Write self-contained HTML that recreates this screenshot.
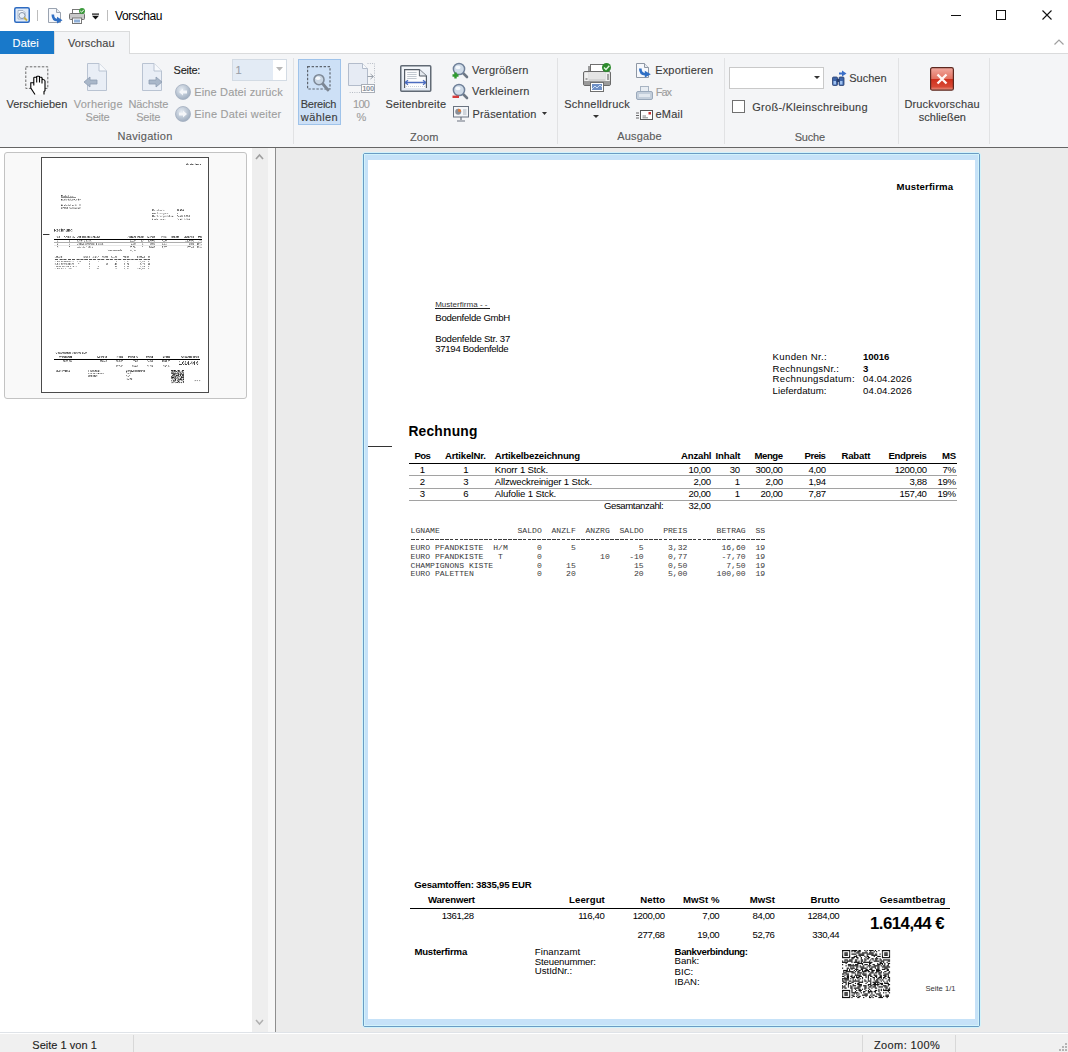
<!DOCTYPE html><html><head><meta charset="utf-8"><style>
html,body{margin:0;padding:0;width:1068px;height:1052px;overflow:hidden;background:#fff}
.r,.t{position:absolute}
.t{white-space:nowrap}
.thumb .t{color:#444 !important}
svg.r{overflow:visible}
</style></head><body>
<div class="r" style="left:0px;top:0px;width:1068px;height:31px;background:#fff"></div>
<div class="t" style="left:115.00px;top:10.00px;font-size:12px;line-height:12px;font-family:'Liberation Sans', sans-serif;font-weight:normal;color:#000;letter-spacing:-0.363px;">Vorschau</div>
<div class="r" style="left:37px;top:10px;width:1px;height:11px;background:#bdbdbd"></div>
<div class="r" style="left:107px;top:10px;width:1px;height:11px;background:#bdbdbd"></div>
<div class="r" style="left:951px;top:15px;width:10px;height:1px;background:#111"></div>
<div class="r" style="left:996px;top:10px;width:10px;height:10px;border:1px solid #111;box-sizing:border-box"></div>
<svg class="r" style="left:1042px;top:10px;" width="10" height="10" viewBox="0 0 10 10"><path d="M0.5 0.5L9.5 9.5M9.5 0.5L0.5 9.5" stroke="#111" stroke-width="1.1"/></svg>
<div class="r" style="left:0px;top:31px;width:1068px;height:23px;background:#fff"></div>
<div class="r" style="left:0px;top:53px;width:1068px;height:1px;background:#dadbdc"></div>
<div class="r" style="left:0px;top:31px;width:54px;height:23px;background:#1979ca"></div>
<div class="t" style="left:12.60px;top:38.00px;font-size:11px;line-height:11px;font-family:'Liberation Sans', sans-serif;font-weight:normal;color:#fff;letter-spacing:0.129px;-webkit-text-stroke:0.12px currentColor;">Datei</div>
<div class="r" style="left:54px;top:31px;width:76px;height:24px;background:#f4f5f7;border:1px solid #dadbdc;border-bottom:none;box-sizing:border-box"></div>
<div class="t" style="left:68.00px;top:38.00px;font-size:11px;line-height:11px;font-family:'Liberation Sans', sans-serif;font-weight:normal;color:#444;letter-spacing:0.119px;-webkit-text-stroke:0.12px currentColor;">Vorschau</div>
<svg class="r" style="left:1054px;top:39px;" width="10" height="6" viewBox="0 0 10 6"><path d="M0.5 5.5L5 1L9.5 5.5" stroke="#a0a0a0" stroke-width="1.2" fill="none"/></svg>
<div class="r" style="left:0px;top:54px;width:1068px;height:93px;background:#f4f5f7"></div>
<div class="r" style="left:0px;top:147px;width:1068px;height:1px;background:#656565"></div>
<div class="r" style="left:293px;top:58px;width:1px;height:86px;background:#e1e2e4"></div>
<div class="r" style="left:557px;top:58px;width:1px;height:86px;background:#e1e2e4"></div>
<div class="r" style="left:724px;top:58px;width:1px;height:86px;background:#e1e2e4"></div>
<div class="r" style="left:898px;top:58px;width:1px;height:86px;background:#e1e2e4"></div>
<div class="r" style="left:989px;top:58px;width:1px;height:86px;background:#e1e2e4"></div>
<div class="t" style="left:117.50px;top:131.00px;font-size:11px;line-height:11px;font-family:'Liberation Sans', sans-serif;font-weight:normal;color:#5a5a5a;letter-spacing:0.314px;-webkit-text-stroke:0.12px currentColor;">Navigation</div>
<div class="t" style="left:409.90px;top:132.00px;font-size:11px;line-height:11px;font-family:'Liberation Sans', sans-serif;font-weight:normal;color:#5a5a5a;letter-spacing:0.098px;-webkit-text-stroke:0.12px currentColor;">Zoom</div>
<div class="t" style="left:617.20px;top:131.00px;font-size:11px;line-height:11px;font-family:'Liberation Sans', sans-serif;font-weight:normal;color:#5a5a5a;letter-spacing:0.175px;-webkit-text-stroke:0.12px currentColor;">Ausgabe</div>
<div class="t" style="left:794.70px;top:132.00px;font-size:11px;line-height:11px;font-family:'Liberation Sans', sans-serif;font-weight:normal;color:#5a5a5a;letter-spacing:-0.221px;-webkit-text-stroke:0.12px currentColor;">Suche</div>
<div class="t" style="left:6.40px;top:99.00px;font-size:11px;line-height:11px;font-family:'Liberation Sans', sans-serif;font-weight:normal;color:#3c3c3c;letter-spacing:0.045px;-webkit-text-stroke:0.12px currentColor;">Verschieben</div>
<div class="t" style="left:73.80px;top:99.00px;font-size:11px;line-height:11px;font-family:'Liberation Sans', sans-serif;font-weight:normal;color:#9e9e9e;letter-spacing:0.203px;-webkit-text-stroke:0.12px currentColor;">Vorherige</div>
<div class="t" style="left:85.60px;top:112.00px;font-size:11px;line-height:11px;font-family:'Liberation Sans', sans-serif;font-weight:normal;color:#9e9e9e;letter-spacing:-0.270px;-webkit-text-stroke:0.12px currentColor;">Seite</div>
<div class="t" style="left:128.40px;top:99.00px;font-size:11px;line-height:11px;font-family:'Liberation Sans', sans-serif;font-weight:normal;color:#9e9e9e;letter-spacing:-0.045px;-webkit-text-stroke:0.12px currentColor;">Nächste</div>
<div class="t" style="left:136.30px;top:112.00px;font-size:11px;line-height:11px;font-family:'Liberation Sans', sans-serif;font-weight:normal;color:#9e9e9e;letter-spacing:-0.270px;-webkit-text-stroke:0.12px currentColor;">Seite</div>
<div class="t" style="left:173.60px;top:65.00px;font-size:11px;line-height:11px;font-family:'Liberation Sans', sans-serif;font-weight:normal;color:#1e1e1e;letter-spacing:-0.261px;-webkit-text-stroke:0.12px currentColor;">Seite:</div>
<div class="r" style="left:232px;top:59px;width:55px;height:22px;background:#fff;border:1px solid #d3dbe4;box-sizing:border-box"></div>
<div class="r" style="left:233px;top:60px;width:40px;height:20px;background:#e3ebf5"></div>
<div class="t" style="left:235.50px;top:65.00px;font-size:11px;line-height:11px;font-family:'Liberation Sans', sans-serif;font-weight:normal;color:#9aa0a8;letter-spacing:0.000px;-webkit-text-stroke:0.12px currentColor;">1</div>
<svg class="r" style="left:276px;top:67px;" width="7" height="4" viewBox="0 0 7 4"><path d="M0 0H7L3.5 4Z" fill="#b8b8b8"/></svg>
<div class="t" style="left:194.30px;top:87.00px;font-size:11px;line-height:11px;font-family:'Liberation Sans', sans-serif;font-weight:normal;color:#9e9e9e;letter-spacing:0.141px;-webkit-text-stroke:0.12px currentColor;">Eine Datei zurück</div>
<div class="t" style="left:194.30px;top:109.00px;font-size:11px;line-height:11px;font-family:'Liberation Sans', sans-serif;font-weight:normal;color:#9e9e9e;letter-spacing:0.240px;-webkit-text-stroke:0.12px currentColor;">Eine Datei weiter</div>
<div class="r" style="left:298px;top:59px;width:43px;height:66px;background:#cde0f6;border:1px solid #9fc3ea;box-sizing:border-box"></div>
<div class="t" style="left:300.80px;top:99.00px;font-size:11px;line-height:11px;font-family:'Liberation Sans', sans-serif;font-weight:normal;color:#3c3c3c;letter-spacing:-0.282px;-webkit-text-stroke:0.12px currentColor;">Bereich</div>
<div class="t" style="left:300.86px;top:112.00px;font-size:11px;line-height:11px;font-family:'Liberation Sans', sans-serif;font-weight:normal;color:#3c3c3c;letter-spacing:0.375px;-webkit-text-stroke:0.12px currentColor;">wählen</div>
<div class="t" style="left:353.00px;top:99.00px;font-size:11px;line-height:11px;font-family:'Liberation Sans', sans-serif;font-weight:normal;color:#9e9e9e;letter-spacing:-0.685px;-webkit-text-stroke:0.12px currentColor;">100</div>
<div class="t" style="left:356.61px;top:112.00px;font-size:11px;line-height:11px;font-family:'Liberation Sans', sans-serif;font-weight:normal;color:#9e9e9e;letter-spacing:0.000px;-webkit-text-stroke:0.12px currentColor;">%</div>
<div class="t" style="left:385.60px;top:99.00px;font-size:11px;line-height:11px;font-family:'Liberation Sans', sans-serif;font-weight:normal;color:#3c3c3c;letter-spacing:0.156px;-webkit-text-stroke:0.12px currentColor;">Seitenbreite</div>
<div class="t" style="left:471.90px;top:65.00px;font-size:11px;line-height:11px;font-family:'Liberation Sans', sans-serif;font-weight:normal;color:#3c3c3c;letter-spacing:0.161px;-webkit-text-stroke:0.12px currentColor;">Vergrößern</div>
<div class="t" style="left:471.90px;top:86.00px;font-size:11px;line-height:11px;font-family:'Liberation Sans', sans-serif;font-weight:normal;color:#3c3c3c;letter-spacing:0.255px;-webkit-text-stroke:0.12px currentColor;">Verkleinern</div>
<div class="t" style="left:472.40px;top:109.00px;font-size:11px;line-height:11px;font-family:'Liberation Sans', sans-serif;font-weight:normal;color:#3c3c3c;letter-spacing:0.212px;-webkit-text-stroke:0.12px currentColor;">Präsentation</div>
<svg class="r" style="left:542px;top:112px;" width="5" height="3" viewBox="0 0 5 3"><path d="M0 0H5L2.5 3Z" fill="#333"/></svg>
<div class="t" style="left:564.30px;top:99.00px;font-size:11px;line-height:11px;font-family:'Liberation Sans', sans-serif;font-weight:normal;color:#3c3c3c;letter-spacing:0.234px;-webkit-text-stroke:0.12px currentColor;">Schnelldruck</div>
<svg class="r" style="left:593px;top:115px;" width="6" height="3" viewBox="0 0 6 3"><path d="M0 0H6L3 3Z" fill="#333"/></svg>
<div class="t" style="left:655.20px;top:65.00px;font-size:11px;line-height:11px;font-family:'Liberation Sans', sans-serif;font-weight:normal;color:#3c3c3c;letter-spacing:0.173px;-webkit-text-stroke:0.12px currentColor;">Exportieren</div>
<div class="t" style="left:655.70px;top:87.00px;font-size:11px;line-height:11px;font-family:'Liberation Sans', sans-serif;font-weight:normal;color:#9e9e9e;letter-spacing:-1.008px;-webkit-text-stroke:0.12px currentColor;">Fax</div>
<div class="t" style="left:655.50px;top:109.00px;font-size:11px;line-height:11px;font-family:'Liberation Sans', sans-serif;font-weight:normal;color:#3c3c3c;letter-spacing:0.228px;-webkit-text-stroke:0.12px currentColor;">eMail</div>
<div class="r" style="left:729px;top:67px;width:95px;height:22px;background:#fff;border:1px solid #c9c9c9;box-sizing:border-box"></div>
<svg class="r" style="left:814px;top:76px;" width="6" height="3" viewBox="0 0 6 3"><path d="M0 0H6L3 3Z" fill="#333"/></svg>
<div class="t" style="left:849.30px;top:73.00px;font-size:11px;line-height:11px;font-family:'Liberation Sans', sans-serif;font-weight:normal;color:#3c3c3c;letter-spacing:-0.018px;-webkit-text-stroke:0.12px currentColor;">Suchen</div>
<div class="r" style="left:732px;top:100px;width:13px;height:13px;background:#fff;border:1px solid #707070;box-sizing:border-box"></div>
<div class="t" style="left:752.30px;top:102.00px;font-size:11px;line-height:11px;font-family:'Liberation Sans', sans-serif;font-weight:normal;color:#3c3c3c;letter-spacing:0.262px;-webkit-text-stroke:0.12px currentColor;">Groß-/Kleinschreibung</div>
<div class="t" style="left:904.40px;top:99.00px;font-size:11px;line-height:11px;font-family:'Liberation Sans', sans-serif;font-weight:normal;color:#3c3c3c;letter-spacing:0.152px;-webkit-text-stroke:0.12px currentColor;">Druckvorschau</div>
<div class="t" style="left:918.70px;top:112.00px;font-size:11px;line-height:11px;font-family:'Liberation Sans', sans-serif;font-weight:normal;color:#3c3c3c;letter-spacing:0.027px;-webkit-text-stroke:0.12px currentColor;">schließen</div>
<div class="r" style="left:0px;top:148px;width:275px;height:884px;background:#fff"></div>
<div class="r" style="left:4px;top:152px;width:243px;height:247px;background:#f9f9f9;border:1px solid #c3c3c3;border-radius:3px;box-sizing:border-box"></div>
<div class="r" style="left:41px;top:157px;width:168px;height:236px;background:#fff;border:1px solid #4a4a4a;box-sizing:border-box"></div>
<div class="r" style="left:252px;top:148px;width:16px;height:884px;background:#eeeeee"></div>
<div class="r" style="left:268px;top:148px;width:7px;height:884px;background:#f7f7f7"></div>
<div class="r" style="left:275px;top:148px;width:1px;height:884px;background:#8e8e8e"></div>
<svg class="r" style="left:255px;top:153px;" width="9" height="7" viewBox="0 0 9 7"><path d="M1 6L4.5 2L8 6" stroke="#a0a0a0" stroke-width="1.7" fill="none"/></svg>
<svg class="r" style="left:255px;top:1019px;" width="9" height="7" viewBox="0 0 9 7"><path d="M1 1L4.5 5L8 1" stroke="#b0b0b0" stroke-width="1.5" fill="none"/></svg>
<div class="r" style="left:276px;top:148px;width:792px;height:884px;background:#ebebeb"></div>
<div class="r" style="left:362px;top:152px;width:619px;height:876px;border:1px solid #d2f3fb;border-radius:3px;box-sizing:border-box"></div>
<div class="r" style="left:363px;top:153px;width:617px;height:874px;border:1px solid #6a9cc4;border-radius:2px;box-sizing:border-box;background:#c6e2f8"></div>
<div class="r" style="left:364px;top:154px;width:615px;height:872px;border:1px solid #d2f3fb;box-sizing:border-box"></div>
<div class="r" style="left:368px;top:160px;width:607px;height:859px;background:#fff"></div>
<svg class="r" style="left:14px;top:7px;" width="16" height="16" viewBox="0 0 16 16"><rect x="0.75" y="0.75" width="14.5" height="14.5" rx="1.5" fill="#dfeaf8" stroke="#2e6bc1" stroke-width="1.5"/><path d="M4 3.5H9L11 5.5V12H4Z" fill="#f4f7fb" stroke="#9aa8ba" stroke-width="0.8"/><circle cx="8" cy="8.5" r="3" fill="#e8f0fa" stroke="#8796aa" stroke-width="1"/><path d="M10.2 10.7L13 13.5" stroke="#c8b040" stroke-width="1.8"/></svg>
<svg class="r" style="left:48px;top:8px;" width="15" height="15" viewBox="0 0 15 15"><path d="M0.5 0.5H8.5L12.5 4.5V14.5H0.5Z" fill="#f6f8fc" stroke="#9aa3b0" stroke-width="1"/><path d="M8.5 0.5V4.5H12.5" fill="#e6eaf0" stroke="#9aa3b0" stroke-width="1"/><path d="M4.8 6.5Q4.8 12 9.5 12.2" stroke="#2f6fc4" stroke-width="2.6" fill="none"/><path d="M9 8.8L14.5 12.2L9 15.6Z" fill="#2f6fc4"/></svg>
<svg class="r" style="left:69px;top:8px;" width="16" height="16" viewBox="0 0 16 16"><rect x="3.5" y="1.5" width="8" height="4" fill="#fff" stroke="#777" stroke-width="1"/><rect x="0.5" y="5.5" width="15" height="6" rx="1" fill="#c9c9c9" stroke="#6e6e6e" stroke-width="1"/><rect x="3.5" y="10" width="9" height="5.5" fill="#fff" stroke="#777" stroke-width="1"/><rect x="5" y="11.5" width="6" height="3" fill="#8fb0d8"/><circle cx="13" cy="3" r="3" fill="#3a9a3a"/><path d="M11.3 3L12.6 4.2L14.8 1.8" stroke="#fff" stroke-width="1" fill="none"/></svg>
<svg class="r" style="left:92px;top:13px;" width="8" height="7" viewBox="0 0 8 7"><rect x="0" y="0.5" width="7" height="1.2" fill="#111"/><path d="M0 2.8H7L3.5 6.5Z" fill="#111"/></svg>
<svg class="r" style="left:25px;top:66px;" width="24" height="29" viewBox="0 0 24 29"><rect x="0.8" y="0.8" width="22" height="21.6" fill="none" stroke="#6a6a6a" stroke-width="1" stroke-dasharray="2.5 1.5"/><path d="M6 22V17H9V12L12 10.5H14.5L17 11.5L20 14V25L19 28.5H10Z" fill="#fff"/><path d="M10 28.5L5.8 22V16.8H8.8V19.5M8.8 16.8V12Q8.8 11.3 9.5 11.3H11Q11.7 11.3 11.7 12V16.5M11.7 12V10.8Q11.7 10.3 12.3 10.3H13.8Q14.5 10.3 14.5 11V16.5M14.5 11.5Q14.5 11.2 15 11.2H16.2Q17 11.2 17 12V17.5M17 12.8L18 13.5Q20 13.8 20 15V24.8L19 25.5V28.5" fill="none" stroke="#000" stroke-width="1.1"/></svg>
<svg class="r" style="left:83px;top:63px;" width="26" height="29" viewBox="0 0 26 29"><path d="M4.5 0.5H16L23.5 8V27.5H4.5Z" fill="#e9eef6" stroke="#b9c3d2" stroke-width="1"/><path d="M16 0.5V8H23.5" fill="#f7f9fc" stroke="#b9c3d2" stroke-width="1"/><path d="M1 19L7 14V17H14V21H7V24Z" fill="#a9b7c9" stroke="#8e9db2" stroke-width="0.8"/></svg>
<svg class="r" style="left:138px;top:63px;" width="26" height="29" viewBox="0 0 26 29"><path d="M4.5 0.5H16L23.5 8V27.5H4.5Z" fill="#e9eef6" stroke="#b9c3d2" stroke-width="1"/><path d="M16 0.5V8H23.5" fill="#f7f9fc" stroke="#b9c3d2" stroke-width="1"/><path d="M24 19L18 14V17H11V21H18V24Z" fill="#a9b7c9" stroke="#8e9db2" stroke-width="0.8"/></svg>
<svg class="r" style="left:175px;top:84px;" width="16" height="16" viewBox="0 0 16 16"><defs><radialGradient id="cg84" cx="0.4" cy="0.35" r="0.7"><stop offset="0" stop-color="#e6ecf3"/><stop offset="1" stop-color="#9aa9bc"/></radialGradient></defs><circle cx="8" cy="8" r="7.5" fill="url(#cg84)" stroke="#a3afbf" stroke-width="0.8"/><path d="M4 8L8 4.5V6.5H12V9.5H8V11.5Z" fill="#f4f6f9"/></svg>
<svg class="r" style="left:175px;top:106px;" width="16" height="16" viewBox="0 0 16 16"><defs><radialGradient id="cg106" cx="0.4" cy="0.35" r="0.7"><stop offset="0" stop-color="#e6ecf3"/><stop offset="1" stop-color="#9aa9bc"/></radialGradient></defs><circle cx="8" cy="8" r="7.5" fill="url(#cg106)" stroke="#a3afbf" stroke-width="0.8"/><path d="M12 8L8 4.5V6.5H4V9.5H8V11.5Z" fill="#f4f6f9"/></svg>
<svg class="r" style="left:307px;top:66px;" width="25" height="27" viewBox="0 0 25 27"><rect x="0.6" y="0.6" width="22.4" height="22.4" fill="none" stroke="#5f6670" stroke-width="1.2" stroke-dasharray="2.4 1.6"/><path d="M15.5 17.5L21 24" stroke="#7d8794" stroke-width="2.8" stroke-linecap="round"/><circle cx="12" cy="13.7" r="5" fill="#c9d6e4" stroke="#7f8a98" stroke-width="1.6"/><ellipse cx="11" cy="12.3" rx="2.4" ry="1.7" fill="#f6f9fc"/></svg>
<svg class="r" style="left:348px;top:63px;" width="28" height="30" viewBox="0 0 28 30"><path d="M19.5 0.5H26.5V29.5H0.5" fill="none" stroke="#b5bbc4" stroke-width="1" stroke-dasharray="1 1.3"/><path d="M0.5 0.5H14.5L19.5 5.5V22.5H0.5Z" fill="#e6ebf4" stroke="#b3bccb" stroke-width="1"/><path d="M14.5 0.5V5.5H19.5" fill="#f7f9fc" stroke="#b3bccb" stroke-width="1"/><path d="M19.5 13.5H25M22.5 11L25.5 13.5L22.5 16" stroke="#9aa1ab" stroke-width="1" fill="none"/><rect x="13.5" y="21.5" width="13" height="8" fill="#fff" stroke="#a8aeb7" stroke-width="1"/><text x="20" y="28.2" font-size="7.5" font-family="Liberation Sans" text-anchor="middle" fill="#8e959f" font-weight="bold" letter-spacing="-0.3">100</text></svg>
<svg class="r" style="left:400px;top:65px;" width="32" height="28" viewBox="0 0 32 28"><defs><linearGradient id="sbg" x1="0" y1="0" x2="0" y2="1"><stop offset="0" stop-color="#f4f7fb"/><stop offset="1" stop-color="#dfe6f0"/></linearGradient></defs><rect x="0.75" y="0.75" width="30" height="25.5" rx="1" fill="url(#sbg)" stroke="#616a75" stroke-width="1.5"/><path d="M4.6 23V4.6H19.4L26.4 11V23" fill="#fcfdfe" stroke="#545c66" stroke-width="1.2"/><path d="M19.4 4.6V11H26.4" fill="#e3e8ee" stroke="#545c66" stroke-width="1"/><path d="M7.2 7.5H16.6M7.2 9.5H16.6M7.2 11.5H16.6M7.2 13.5H16.6" stroke="#a9b1bb" stroke-width="0.7"/><path d="M5 17.5H26M5 17.5L8 15.3M5 17.5L8 19.7M26 17.5L23 15.3M26 17.5L23 19.7" stroke="#4b6cc0" stroke-width="1.3" fill="none"/><path d="M6 21.5H25" stroke="#b9c2d0" stroke-width="0.8" stroke-dasharray="1 1"/></svg>
<svg class="r" style="left:452px;top:62px;" width="17" height="17" viewBox="0 0 17 17"><path d="M10 10L15 15" stroke="#6e7884" stroke-width="2.6" stroke-linecap="round"/><circle cx="7" cy="7" r="5.6" fill="#cfdbe8" stroke="#6f8099" stroke-width="1.5"/><ellipse cx="6" cy="5.5" rx="2.6" ry="1.8" fill="#f4f8fc"/><path d="M0.5 13.5H6.5M3.5 10.5V16.5" stroke="#2f9a2f" stroke-width="2.4"/></svg>
<svg class="r" style="left:452px;top:83px;" width="17" height="17" viewBox="0 0 17 17"><path d="M10 10L15 15" stroke="#6e7884" stroke-width="2.6" stroke-linecap="round"/><circle cx="7" cy="7" r="5.6" fill="#cfdbe8" stroke="#6f8099" stroke-width="1.5"/><ellipse cx="6" cy="5.5" rx="2.6" ry="1.8" fill="#f4f8fc"/><path d="M0.5 13.8H7" stroke="#d53b3b" stroke-width="2.4"/></svg>
<svg class="r" style="left:453px;top:106px;" width="16" height="16" viewBox="0 0 16 16"><rect x="0.5" y="0.5" width="15" height="10.5" fill="#f4f6f9" stroke="#6a7380" stroke-width="1"/><circle cx="5.2" cy="5.8" r="3" fill="#8a8f98"/><path d="M5.2 5.8V2.8A3 3 0 0 1 8.2 5.8Z" fill="#e07b3a"/><path d="M10 4H13.5M10 6H13.5M10 8H13.5" stroke="#9aa3ae" stroke-width="0.8"/><path d="M8 11V14M4 15H12" stroke="#6a7380" stroke-width="1.2"/></svg>
<svg class="r" style="left:583px;top:62px;" width="29" height="30" viewBox="0 0 29 30"><rect x="7.5" y="2.5" width="13" height="8" fill="#fff" stroke="#6f6f6f" stroke-width="1"/><path d="M6 10V4" stroke="#444" stroke-width="1"/><rect x="0.5" y="9.5" width="27" height="14" rx="1.5" fill="#d2d2d2" stroke="#6a6a6a" stroke-width="1"/><rect x="6" y="10" width="16" height="7" fill="#e4e4e4"/><rect x="1.5" y="10.5" width="4" height="12" fill="#f0f0f0"/><rect x="22.5" y="10.5" width="4" height="12" fill="#f0f0f0"/><path d="M24 13H26M24 15H26M24 17H26M2.5 17H4.5" stroke="#555" stroke-width="1"/><rect x="1" y="19" width="26" height="4" fill="#9a9a9a"/><rect x="7.5" y="20.5" width="13" height="9" fill="#fff" stroke="#6f6f6f" stroke-width="1"/><rect x="9" y="22" width="10" height="6" fill="#6e8fc5"/><path d="M9 27L12 24L14 26L17 23L19 25" stroke="#c8dcf4" stroke-width="1" fill="none"/><circle cx="23.5" cy="5.5" r="4.5" fill="#2c8a2c"/><path d="M21 5.5L23 7.5L26.3 3.8" stroke="#dff5df" stroke-width="1.4" fill="none"/></svg>
<svg class="r" style="left:636px;top:63px;" width="16" height="15" viewBox="0 0 16 15"><path d="M0.5 0.5H8.5L12.5 4.5V14.5H0.5Z" fill="#f6f8fc" stroke="#8e97a4" stroke-width="1"/><path d="M8.5 0.5V4.5H12.5" fill="#e6eaf0" stroke="#8e97a4" stroke-width="1"/><path d="M4.3 5.5Q4.3 11 9 11.2" stroke="#2f6fc4" stroke-width="2.6" fill="none"/><path d="M8.8 7.8L14.8 11.2L8.8 14.6Z" fill="#2f6fc4"/></svg>
<svg class="r" style="left:636px;top:86px;" width="17" height="14" viewBox="0 0 17 14"><rect x="4.5" y="0.5" width="8" height="5" fill="#e8edf3" stroke="#a7b3c2" stroke-width="1"/><rect x="0.5" y="5.5" width="16" height="8" rx="1.5" fill="#c3cedb" stroke="#9aa9bb" stroke-width="1"/><rect x="3" y="8" width="11" height="3" fill="#e2e8ef"/></svg>
<svg class="r" style="left:636px;top:110px;" width="17" height="10" viewBox="0 0 17 10"><path d="M0 3H3M0 5.5H3M0 8H3" stroke="#555" stroke-width="0.9"/><rect x="4.5" y="0.5" width="12" height="9" fill="#fff" stroke="#555" stroke-width="1"/><path d="M6.5 6H10M6.5 7.8H12" stroke="#666" stroke-width="0.8"/><rect x="12.5" y="2" width="2.5" height="2.5" fill="#c33"/></svg>
<svg class="r" style="left:832px;top:70px;" width="15" height="16" viewBox="0 0 15 16"><path d="M10 0.5L14.5 3.5L10 6.5V4.5H7V2.5H10Z" fill="#3a6fc8"/><rect x="0.5" y="7" width="5" height="8.5" rx="1" fill="#3d64a8" stroke="#283f6e" stroke-width="0.8"/><rect x="7" y="7" width="5" height="8.5" rx="1" fill="#3d64a8" stroke="#283f6e" stroke-width="0.8"/><rect x="4.5" y="9" width="3" height="3" fill="#283f6e"/><rect x="1.5" y="11" width="2.5" height="3.5" fill="#9ec0ee"/><rect x="8" y="11" width="2.5" height="3.5" fill="#9ec0ee"/></svg>
<svg class="r" style="left:930px;top:67px;" width="24" height="24" viewBox="0 0 24 24"><defs><linearGradient id="rg" x1="0" y1="0" x2="0" y2="1"><stop offset="0" stop-color="#f2aaa0"/><stop offset="0.5" stop-color="#e2705f"/><stop offset="0.52" stop-color="#cf2f1c"/><stop offset="0.85" stop-color="#d84a36"/><stop offset="1" stop-color="#eea090"/></linearGradient></defs><rect x="0.6" y="0.6" width="22.8" height="22.6" rx="1.8" fill="url(#rg)" stroke="#5c2820" stroke-width="1.2"/><path d="M7.5 7.5L16.5 16.5M16.5 7.5L7.5 16.5" stroke="#fff6f4" stroke-width="2.4"/></svg>
<div class="r" style="left:0px;top:1032px;width:1068px;height:1px;background:#dfe3e8"></div>
<div class="r" style="left:0px;top:1033px;width:1068px;height:1px;background:#ffffff"></div>
<div class="r" style="left:0px;top:1034px;width:1068px;height:18px;background:#f0f0f0"></div>
<div class="r" style="left:133px;top:1035px;width:1px;height:17px;background:#d8d8d8"></div>
<div class="r" style="left:862px;top:1035px;width:1px;height:17px;background:#d8d8d8"></div>
<div class="r" style="left:955px;top:1035px;width:1px;height:17px;background:#d8d8d8"></div>
<svg class="r" style="left:1056px;top:1040px;" width="12" height="12" viewBox="0 0 12 12"><rect x="9" y="3" width="2" height="2" fill="#b4b4b4"/><rect x="6" y="6" width="2" height="2" fill="#b4b4b4"/><rect x="9" y="6" width="2" height="2" fill="#b4b4b4"/><rect x="3" y="9" width="2" height="2" fill="#b4b4b4"/><rect x="6" y="9" width="2" height="2" fill="#b4b4b4"/><rect x="9" y="9" width="2" height="2" fill="#b4b4b4"/></svg>
<div class="t" style="left:32.30px;top:1040.00px;font-size:11px;line-height:11px;font-family:'Liberation Sans', sans-serif;font-weight:normal;color:#1e1e1e;letter-spacing:0.030px;-webkit-text-stroke:0.12px currentColor;">Seite 1 von 1</div>
<div class="t" style="left:874.00px;top:1040.00px;font-size:11px;line-height:11px;font-family:'Liberation Sans', sans-serif;font-weight:normal;color:#1e1e1e;letter-spacing:0.381px;-webkit-text-stroke:0.12px currentColor;">Zoom: 100%</div>
<div class="r" style="left:368px;top:160px;width:607px;height:859px;overflow:hidden"><div class="t" style="left:528.50px;top:22.00px;font-size:9.6px;line-height:9.6px;font-family:'Liberation Sans', sans-serif;font-weight:bold;color:#000;letter-spacing:0.174px;">Musterfirma</div><div class="t" style="left:67.20px;top:141.00px;font-size:8px;line-height:8px;font-family:'Liberation Sans', sans-serif;font-weight:normal;color:#333;letter-spacing:0.021px;">Musterfirma - -</div><div class="r" style="left:67px;top:148px;width:55px;height:1px;background:#222"></div><div class="t" style="left:67.30px;top:153.00px;font-size:9.6px;line-height:9.6px;font-family:'Liberation Sans', sans-serif;font-weight:normal;color:#000;letter-spacing:-0.283px;">Bodenfelde GmbH</div><div class="t" style="left:67.30px;top:174.00px;font-size:9.6px;line-height:9.6px;font-family:'Liberation Sans', sans-serif;font-weight:normal;color:#000;letter-spacing:-0.236px;">Bodenfelde Str. 37</div><div class="t" style="left:67.30px;top:184.00px;font-size:9.6px;line-height:9.6px;font-family:'Liberation Sans', sans-serif;font-weight:normal;color:#000;letter-spacing:-0.310px;">37194 Bodenfelde</div><div class="t" style="left:404.60px;top:192.00px;font-size:9.6px;line-height:9.6px;font-family:'Liberation Sans', sans-serif;font-weight:normal;color:#000;letter-spacing:0.331px;">Kunden Nr.:</div><div class="t" style="left:495.10px;top:192.00px;font-size:9.6px;line-height:9.6px;font-family:'Liberation Sans', sans-serif;font-weight:bold;color:#000;letter-spacing:-0.097px;">10016</div><div class="t" style="left:404.60px;top:204.00px;font-size:9.6px;line-height:9.6px;font-family:'Liberation Sans', sans-serif;font-weight:normal;color:#000;letter-spacing:0.233px;">RechnungsNr.:</div><div class="t" style="left:495.10px;top:204.00px;font-size:9.6px;line-height:9.6px;font-family:'Liberation Sans', sans-serif;font-weight:bold;color:#000;letter-spacing:0.000px;">3</div><div class="t" style="left:404.60px;top:214.00px;font-size:9.6px;line-height:9.6px;font-family:'Liberation Sans', sans-serif;font-weight:normal;color:#000;letter-spacing:0.293px;">Rechnungsdatum:</div><div class="t" style="left:495.10px;top:214.00px;font-size:9.6px;line-height:9.6px;font-family:'Liberation Sans', sans-serif;font-weight:normal;color:#000;letter-spacing:0.084px;">04.04.2026</div><div class="t" style="left:404.60px;top:226.00px;font-size:9.6px;line-height:9.6px;font-family:'Liberation Sans', sans-serif;font-weight:normal;color:#000;letter-spacing:0.039px;">Lieferdatum:</div><div class="t" style="left:495.10px;top:226.00px;font-size:9.6px;line-height:9.6px;font-family:'Liberation Sans', sans-serif;font-weight:normal;color:#000;letter-spacing:0.084px;">04.04.2026</div><div class="t" style="left:40.40px;top:265.00px;font-size:13.8px;line-height:13.8px;font-family:'Liberation Sans', sans-serif;font-weight:bold;color:#000;letter-spacing:0.217px;">Rechnung</div><div class="r" style="left:0px;top:286px;width:24px;height:1px;background:#333"></div><div class="t" style="left:46.40px;top:291.00px;font-size:9.6px;line-height:9.6px;font-family:'Liberation Sans', sans-serif;font-weight:bold;color:#000;letter-spacing:-0.558px;">Pos</div><div class="t" style="left:77.10px;top:291.00px;font-size:9.6px;line-height:9.6px;font-family:'Liberation Sans', sans-serif;font-weight:bold;color:#000;letter-spacing:-0.197px;">ArtikelNr.</div><div class="t" style="left:126.80px;top:291.00px;font-size:9.6px;line-height:9.6px;font-family:'Liberation Sans', sans-serif;font-weight:bold;color:#000;letter-spacing:-0.186px;">Artikelbezeichnung</div><div class="t" style="left:313.10px;top:291.00px;font-size:9.6px;line-height:9.6px;font-family:'Liberation Sans', sans-serif;font-weight:bold;color:#000;letter-spacing:-0.218px;">Anzahl</div><div class="t" style="left:347.40px;top:291.00px;font-size:9.6px;line-height:9.6px;font-family:'Liberation Sans', sans-serif;font-weight:bold;color:#000;letter-spacing:-0.117px;">Inhalt</div><div class="t" style="left:386.60px;top:291.00px;font-size:9.6px;line-height:9.6px;font-family:'Liberation Sans', sans-serif;font-weight:bold;color:#000;letter-spacing:-0.471px;">Menge</div><div class="t" style="left:436.60px;top:291.00px;font-size:9.6px;line-height:9.6px;font-family:'Liberation Sans', sans-serif;font-weight:bold;color:#000;letter-spacing:-0.543px;">Preis</div><div class="t" style="left:473.40px;top:291.00px;font-size:9.6px;line-height:9.6px;font-family:'Liberation Sans', sans-serif;font-weight:bold;color:#000;letter-spacing:-0.171px;">Rabatt</div><div class="t" style="left:520.50px;top:291.00px;font-size:9.6px;line-height:9.6px;font-family:'Liberation Sans', sans-serif;font-weight:bold;color:#000;letter-spacing:-0.398px;">Endpreis</div><div class="t" style="left:574.00px;top:291.00px;font-size:9.6px;line-height:9.6px;font-family:'Liberation Sans', sans-serif;font-weight:bold;color:#000;letter-spacing:-0.200px;">MS</div><div class="r" style="left:41px;top:302.5px;width:548px;height:1.6px;background:#000"></div><div class="t" style="left:51.84px;top:305.00px;font-size:9.6px;line-height:9.6px;font-family:'Liberation Sans', sans-serif;font-weight:normal;color:#000;letter-spacing:0.000px;">1</div><div class="t" style="left:95.34px;top:305.00px;font-size:9.6px;line-height:9.6px;font-family:'Liberation Sans', sans-serif;font-weight:normal;color:#000;letter-spacing:0.000px;">1</div><div class="t" style="left:126.80px;top:305.00px;font-size:9.6px;line-height:9.6px;font-family:'Liberation Sans', sans-serif;font-weight:normal;color:#000;letter-spacing:-0.174px;">Knorr 1 Stck.</div><div class="t" style="left:320.55px;top:305.00px;font-size:9.6px;line-height:9.6px;font-family:'Liberation Sans', sans-serif;font-weight:normal;color:#000;letter-spacing:-0.400px;">10,00</div><div class="t" style="left:361.74px;top:305.00px;font-size:9.6px;line-height:9.6px;font-family:'Liberation Sans', sans-serif;font-weight:normal;color:#000;letter-spacing:-0.400px;">30</div><div class="t" style="left:387.62px;top:305.00px;font-size:9.6px;line-height:9.6px;font-family:'Liberation Sans', sans-serif;font-weight:normal;color:#000;letter-spacing:-0.400px;">300,00</div><div class="t" style="left:440.53px;top:305.00px;font-size:9.6px;line-height:9.6px;font-family:'Liberation Sans', sans-serif;font-weight:normal;color:#000;letter-spacing:-0.400px;">4,00</div><div class="t" style="left:526.70px;top:305.00px;font-size:9.6px;line-height:9.6px;font-family:'Liberation Sans', sans-serif;font-weight:normal;color:#000;letter-spacing:-0.400px;">1200,00</div><div class="t" style="left:574.53px;top:305.00px;font-size:9.6px;line-height:9.6px;font-family:'Liberation Sans', sans-serif;font-weight:normal;color:#000;letter-spacing:-0.400px;">7%</div><div class="r" style="left:41px;top:315px;width:548px;height:1px;background:#a2a2a2"></div><div class="t" style="left:51.84px;top:317.00px;font-size:9.6px;line-height:9.6px;font-family:'Liberation Sans', sans-serif;font-weight:normal;color:#000;letter-spacing:0.000px;">2</div><div class="t" style="left:95.34px;top:317.00px;font-size:9.6px;line-height:9.6px;font-family:'Liberation Sans', sans-serif;font-weight:normal;color:#000;letter-spacing:0.000px;">3</div><div class="t" style="left:126.80px;top:317.00px;font-size:9.6px;line-height:9.6px;font-family:'Liberation Sans', sans-serif;font-weight:normal;color:#000;letter-spacing:-0.173px;">Allzweckreiniger 1 Stck.</div><div class="t" style="left:325.53px;top:317.00px;font-size:9.6px;line-height:9.6px;font-family:'Liberation Sans', sans-serif;font-weight:normal;color:#000;letter-spacing:-0.400px;">2,00</div><div class="t" style="left:366.67px;top:317.00px;font-size:9.6px;line-height:9.6px;font-family:'Liberation Sans', sans-serif;font-weight:normal;color:#000;letter-spacing:-0.400px;">1</div><div class="t" style="left:397.53px;top:317.00px;font-size:9.6px;line-height:9.6px;font-family:'Liberation Sans', sans-serif;font-weight:normal;color:#000;letter-spacing:-0.400px;">2,00</div><div class="t" style="left:440.53px;top:317.00px;font-size:9.6px;line-height:9.6px;font-family:'Liberation Sans', sans-serif;font-weight:normal;color:#000;letter-spacing:-0.400px;">1,94</div><div class="t" style="left:541.53px;top:317.00px;font-size:9.6px;line-height:9.6px;font-family:'Liberation Sans', sans-serif;font-weight:normal;color:#000;letter-spacing:-0.400px;">3,88</div><div class="t" style="left:569.60px;top:317.00px;font-size:9.6px;line-height:9.6px;font-family:'Liberation Sans', sans-serif;font-weight:normal;color:#000;letter-spacing:-0.400px;">19%</div><div class="r" style="left:41px;top:328px;width:548px;height:1px;background:#a2a2a2"></div><div class="t" style="left:51.84px;top:329.00px;font-size:9.6px;line-height:9.6px;font-family:'Liberation Sans', sans-serif;font-weight:normal;color:#000;letter-spacing:0.000px;">3</div><div class="t" style="left:95.34px;top:329.00px;font-size:9.6px;line-height:9.6px;font-family:'Liberation Sans', sans-serif;font-weight:normal;color:#000;letter-spacing:0.000px;">6</div><div class="t" style="left:126.80px;top:329.00px;font-size:9.6px;line-height:9.6px;font-family:'Liberation Sans', sans-serif;font-weight:normal;color:#000;letter-spacing:-0.134px;">Alufolie 1 Stck.</div><div class="t" style="left:320.55px;top:329.00px;font-size:9.6px;line-height:9.6px;font-family:'Liberation Sans', sans-serif;font-weight:normal;color:#000;letter-spacing:-0.400px;">20,00</div><div class="t" style="left:366.67px;top:329.00px;font-size:9.6px;line-height:9.6px;font-family:'Liberation Sans', sans-serif;font-weight:normal;color:#000;letter-spacing:-0.400px;">1</div><div class="t" style="left:392.55px;top:329.00px;font-size:9.6px;line-height:9.6px;font-family:'Liberation Sans', sans-serif;font-weight:normal;color:#000;letter-spacing:-0.400px;">20,00</div><div class="t" style="left:440.53px;top:329.00px;font-size:9.6px;line-height:9.6px;font-family:'Liberation Sans', sans-serif;font-weight:normal;color:#000;letter-spacing:-0.400px;">7,87</div><div class="t" style="left:531.62px;top:329.00px;font-size:9.6px;line-height:9.6px;font-family:'Liberation Sans', sans-serif;font-weight:normal;color:#000;letter-spacing:-0.400px;">157,40</div><div class="t" style="left:569.60px;top:329.00px;font-size:9.6px;line-height:9.6px;font-family:'Liberation Sans', sans-serif;font-weight:normal;color:#000;letter-spacing:-0.400px;">19%</div><div class="r" style="left:41px;top:340px;width:548px;height:1px;background:#a2a2a2"></div><div class="t" style="left:235.90px;top:341.00px;font-size:9.6px;line-height:9.6px;font-family:'Liberation Sans', sans-serif;font-weight:normal;color:#000;letter-spacing:-0.388px;">Gesamtanzahl:</div><div class="t" style="left:320.55px;top:341.00px;font-size:9.6px;line-height:9.6px;font-family:'Liberation Sans', sans-serif;font-weight:normal;color:#000;letter-spacing:-0.400px;">32,00</div><div class="t" style="left:42.60px;top:367.00px;font-size:8.1px;line-height:8.1px;font-family:'Liberation Mono', monospace;font-weight:normal;color:#3a3a3a;letter-spacing:0.000px;">LGNAME&nbsp;&nbsp;&nbsp;&nbsp;&nbsp;&nbsp;&nbsp;&nbsp;&nbsp;&nbsp;&nbsp;&nbsp;&nbsp;&nbsp;&nbsp;&nbsp;SALDO&nbsp;&nbsp;ANZLF&nbsp;&nbsp;ANZRG&nbsp;&nbsp;SALDO&nbsp;&nbsp;&nbsp;&nbsp;PREIS&nbsp;&nbsp;&nbsp;&nbsp;&nbsp;&nbsp;BETRAG&nbsp;&nbsp;SS</div><div class="r" style="left:43px;top:379px;width:354.8px;height:1px;background:repeating-linear-gradient(90deg,#3a3a3a 0 3.6px,rgba(0,0,0,0) 3.6px 4.86px)"></div><div class="t" style="left:42.60px;top:384.00px;font-size:8.1px;line-height:8.1px;font-family:'Liberation Mono', monospace;font-weight:normal;color:#3a3a3a;letter-spacing:0.000px;">EURO&nbsp;PFANDKISTE&nbsp;&nbsp;H/M&nbsp;&nbsp;&nbsp;&nbsp;&nbsp;&nbsp;0&nbsp;&nbsp;&nbsp;&nbsp;&nbsp;&nbsp;5&nbsp;&nbsp;&nbsp;&nbsp;&nbsp;&nbsp;&nbsp;&nbsp;&nbsp;&nbsp;&nbsp;&nbsp;&nbsp;5&nbsp;&nbsp;&nbsp;&nbsp;&nbsp;3,32&nbsp;&nbsp;&nbsp;&nbsp;&nbsp;&nbsp;&nbsp;16,60&nbsp;&nbsp;19</div><div class="t" style="left:42.60px;top:393.00px;font-size:8.1px;line-height:8.1px;font-family:'Liberation Mono', monospace;font-weight:normal;color:#3a3a3a;letter-spacing:0.000px;">EURO&nbsp;PFANDKISTE&nbsp;&nbsp;&nbsp;T&nbsp;&nbsp;&nbsp;&nbsp;&nbsp;&nbsp;&nbsp;0&nbsp;&nbsp;&nbsp;&nbsp;&nbsp;&nbsp;&nbsp;&nbsp;&nbsp;&nbsp;&nbsp;&nbsp;10&nbsp;&nbsp;&nbsp;&nbsp;-10&nbsp;&nbsp;&nbsp;&nbsp;&nbsp;0,77&nbsp;&nbsp;&nbsp;&nbsp;&nbsp;&nbsp;&nbsp;-7,70&nbsp;&nbsp;19</div><div class="t" style="left:42.60px;top:402.00px;font-size:8.1px;line-height:8.1px;font-family:'Liberation Mono', monospace;font-weight:normal;color:#3a3a3a;letter-spacing:0.000px;">CHAMPIGNONS&nbsp;KISTE&nbsp;&nbsp;&nbsp;&nbsp;&nbsp;&nbsp;&nbsp;&nbsp;&nbsp;0&nbsp;&nbsp;&nbsp;&nbsp;&nbsp;15&nbsp;&nbsp;&nbsp;&nbsp;&nbsp;&nbsp;&nbsp;&nbsp;&nbsp;&nbsp;&nbsp;&nbsp;15&nbsp;&nbsp;&nbsp;&nbsp;&nbsp;0,50&nbsp;&nbsp;&nbsp;&nbsp;&nbsp;&nbsp;&nbsp;&nbsp;7,50&nbsp;&nbsp;19</div><div class="t" style="left:42.60px;top:410.00px;font-size:8.1px;line-height:8.1px;font-family:'Liberation Mono', monospace;font-weight:normal;color:#3a3a3a;letter-spacing:0.000px;">EURO&nbsp;PALETTEN&nbsp;&nbsp;&nbsp;&nbsp;&nbsp;&nbsp;&nbsp;&nbsp;&nbsp;&nbsp;&nbsp;&nbsp;&nbsp;0&nbsp;&nbsp;&nbsp;&nbsp;&nbsp;20&nbsp;&nbsp;&nbsp;&nbsp;&nbsp;&nbsp;&nbsp;&nbsp;&nbsp;&nbsp;&nbsp;&nbsp;20&nbsp;&nbsp;&nbsp;&nbsp;&nbsp;5,00&nbsp;&nbsp;&nbsp;&nbsp;&nbsp;&nbsp;100,00&nbsp;&nbsp;19</div><div class="t" style="left:46.30px;top:720.00px;font-size:9.6px;line-height:9.6px;font-family:'Liberation Sans', sans-serif;font-weight:bold;color:#000;letter-spacing:-0.207px;">Gesamtoffen: 3835,95 EUR</div><div class="t" style="left:60.00px;top:735.00px;font-size:9.6px;line-height:9.6px;font-family:'Liberation Sans', sans-serif;font-weight:bold;color:#000;letter-spacing:-0.215px;">Warenwert</div><div class="t" style="left:201.02px;top:735.00px;font-size:9.6px;line-height:9.6px;font-family:'Liberation Sans', sans-serif;font-weight:bold;color:#000;letter-spacing:0.100px;">Leergut</div><div class="t" style="left:272.27px;top:735.00px;font-size:9.6px;line-height:9.6px;font-family:'Liberation Sans', sans-serif;font-weight:bold;color:#000;letter-spacing:0.100px;">Netto</div><div class="t" style="left:314.91px;top:735.00px;font-size:9.6px;line-height:9.6px;font-family:'Liberation Sans', sans-serif;font-weight:bold;color:#000;letter-spacing:0.100px;">MwSt %</div><div class="t" style="left:381.64px;top:735.00px;font-size:9.6px;line-height:9.6px;font-family:'Liberation Sans', sans-serif;font-weight:bold;color:#000;letter-spacing:0.100px;">MwSt</div><div class="t" style="left:442.40px;top:735.00px;font-size:9.6px;line-height:9.6px;font-family:'Liberation Sans', sans-serif;font-weight:bold;color:#000;letter-spacing:0.100px;">Brutto</div><div class="t" style="left:511.74px;top:735.00px;font-size:9.6px;line-height:9.6px;font-family:'Liberation Sans', sans-serif;font-weight:bold;color:#000;letter-spacing:0.100px;">Gesamtbetrag</div><div class="r" style="left:42px;top:747.6px;width:540px;height:1.6px;background:#000"></div><div class="t" style="left:73.70px;top:751.00px;font-size:9.6px;line-height:9.6px;font-family:'Liberation Sans', sans-serif;font-weight:normal;color:#000;letter-spacing:-0.400px;">1361,28</div><div class="t" style="left:210.14px;top:751.00px;font-size:9.6px;line-height:9.6px;font-family:'Liberation Sans', sans-serif;font-weight:normal;color:#000;letter-spacing:-0.400px;">116,40</div><div class="t" style="left:264.70px;top:751.00px;font-size:9.6px;line-height:9.6px;font-family:'Liberation Sans', sans-serif;font-weight:normal;color:#000;letter-spacing:-0.400px;">1200,00</div><div class="t" style="left:334.23px;top:751.00px;font-size:9.6px;line-height:9.6px;font-family:'Liberation Sans', sans-serif;font-weight:normal;color:#000;letter-spacing:-0.400px;">7,00</div><div class="t" style="left:384.55px;top:751.00px;font-size:9.6px;line-height:9.6px;font-family:'Liberation Sans', sans-serif;font-weight:normal;color:#000;letter-spacing:-0.400px;">84,00</div><div class="t" style="left:439.40px;top:751.00px;font-size:9.6px;line-height:9.6px;font-family:'Liberation Sans', sans-serif;font-weight:normal;color:#000;letter-spacing:-0.400px;">1284,00</div><div class="t" style="left:269.62px;top:770.00px;font-size:9.6px;line-height:9.6px;font-family:'Liberation Sans', sans-serif;font-weight:normal;color:#000;letter-spacing:-0.400px;">277,68</div><div class="t" style="left:329.25px;top:770.00px;font-size:9.6px;line-height:9.6px;font-family:'Liberation Sans', sans-serif;font-weight:normal;color:#000;letter-spacing:-0.400px;">19,00</div><div class="t" style="left:384.55px;top:770.00px;font-size:9.6px;line-height:9.6px;font-family:'Liberation Sans', sans-serif;font-weight:normal;color:#000;letter-spacing:-0.400px;">52,76</div><div class="t" style="left:444.32px;top:770.00px;font-size:9.6px;line-height:9.6px;font-family:'Liberation Sans', sans-serif;font-weight:normal;color:#000;letter-spacing:-0.400px;">330,44</div><div class="t" style="left:502.00px;top:756.00px;font-size:16.8px;line-height:16.8px;font-family:'Liberation Sans', sans-serif;font-weight:bold;color:#000;letter-spacing:-0.520px;">1.614,44 €</div><div class="t" style="left:46.40px;top:787.00px;font-size:9.6px;line-height:9.6px;font-family:'Liberation Sans', sans-serif;font-weight:bold;color:#000;letter-spacing:-0.206px;">Musterfirma</div><div class="t" style="left:166.80px;top:787.00px;font-size:9.6px;line-height:9.6px;font-family:'Liberation Sans', sans-serif;font-weight:normal;color:#000;letter-spacing:0.083px;">Finanzamt</div><div class="t" style="left:166.80px;top:797.00px;font-size:9.6px;line-height:9.6px;font-family:'Liberation Sans', sans-serif;font-weight:normal;color:#000;letter-spacing:-0.161px;">Steuenummer:</div><div class="t" style="left:166.80px;top:806.00px;font-size:9.6px;line-height:9.6px;font-family:'Liberation Sans', sans-serif;font-weight:normal;color:#000;letter-spacing:0.000px;">UstIdNr.:</div><div class="t" style="left:306.60px;top:787.00px;font-size:9.6px;line-height:9.6px;font-family:'Liberation Sans', sans-serif;font-weight:bold;color:#000;letter-spacing:-0.390px;">Bankverbindung:</div><div class="t" style="left:306.60px;top:796.00px;font-size:9.6px;line-height:9.6px;font-family:'Liberation Sans', sans-serif;font-weight:normal;color:#000;letter-spacing:0.000px;">Bank:</div><div class="t" style="left:306.60px;top:807.00px;font-size:9.6px;line-height:9.6px;font-family:'Liberation Sans', sans-serif;font-weight:normal;color:#000;letter-spacing:0.000px;">BIC:</div><div class="t" style="left:306.60px;top:817.00px;font-size:9.6px;line-height:9.6px;font-family:'Liberation Sans', sans-serif;font-weight:normal;color:#000;letter-spacing:0.000px;">IBAN:</div><svg class="r" style="left:474.30px;top:790.30px" width="48.1" height="48.1" viewBox="0 0 48.1 48.1"><g fill="#111"><rect x="0.00" y="0.00" width="8.21" height="1.17"/><rect x="9.39" y="0.00" width="5.87" height="1.17"/><rect x="16.42" y="0.00" width="2.35" height="1.17"/><rect x="22.29" y="0.00" width="1.17" height="1.17"/><rect x="24.64" y="0.00" width="1.17" height="1.17"/><rect x="26.98" y="0.00" width="4.69" height="1.17"/><rect x="32.85" y="0.00" width="1.17" height="1.17"/><rect x="36.37" y="0.00" width="1.17" height="1.17"/><rect x="39.89" y="0.00" width="8.21" height="1.17"/><rect x="0.00" y="1.17" width="1.17" height="1.17"/><rect x="7.04" y="1.17" width="1.17" height="1.17"/><rect x="9.39" y="1.17" width="1.17" height="1.17"/><rect x="11.73" y="1.17" width="2.35" height="1.17"/><rect x="15.25" y="1.17" width="3.52" height="1.17"/><rect x="23.46" y="1.17" width="1.17" height="1.17"/><rect x="28.16" y="1.17" width="1.17" height="1.17"/><rect x="31.68" y="1.17" width="1.17" height="1.17"/><rect x="34.02" y="1.17" width="1.17" height="1.17"/><rect x="39.89" y="1.17" width="1.17" height="1.17"/><rect x="46.93" y="1.17" width="1.17" height="1.17"/><rect x="0.00" y="2.35" width="1.17" height="1.17"/><rect x="2.35" y="2.35" width="3.52" height="1.17"/><rect x="7.04" y="2.35" width="1.17" height="1.17"/><rect x="14.08" y="2.35" width="3.52" height="1.17"/><rect x="19.94" y="2.35" width="5.87" height="1.17"/><rect x="26.98" y="2.35" width="4.69" height="1.17"/><rect x="39.89" y="2.35" width="1.17" height="1.17"/><rect x="42.23" y="2.35" width="3.52" height="1.17"/><rect x="46.93" y="2.35" width="1.17" height="1.17"/><rect x="0.00" y="3.52" width="1.17" height="1.17"/><rect x="2.35" y="3.52" width="3.52" height="1.17"/><rect x="7.04" y="3.52" width="1.17" height="1.17"/><rect x="9.39" y="3.52" width="4.69" height="1.17"/><rect x="16.42" y="3.52" width="5.87" height="1.17"/><rect x="24.64" y="3.52" width="7.04" height="1.17"/><rect x="32.85" y="3.52" width="2.35" height="1.17"/><rect x="37.54" y="3.52" width="1.17" height="1.17"/><rect x="39.89" y="3.52" width="1.17" height="1.17"/><rect x="42.23" y="3.52" width="3.52" height="1.17"/><rect x="46.93" y="3.52" width="1.17" height="1.17"/><rect x="0.00" y="4.69" width="1.17" height="1.17"/><rect x="2.35" y="4.69" width="3.52" height="1.17"/><rect x="7.04" y="4.69" width="1.17" height="1.17"/><rect x="14.08" y="4.69" width="1.17" height="1.17"/><rect x="16.42" y="4.69" width="5.87" height="1.17"/><rect x="24.64" y="4.69" width="1.17" height="1.17"/><rect x="29.33" y="4.69" width="5.87" height="1.17"/><rect x="39.89" y="4.69" width="1.17" height="1.17"/><rect x="42.23" y="4.69" width="3.52" height="1.17"/><rect x="46.93" y="4.69" width="1.17" height="1.17"/><rect x="0.00" y="5.87" width="1.17" height="1.17"/><rect x="7.04" y="5.87" width="1.17" height="1.17"/><rect x="11.73" y="5.87" width="3.52" height="1.17"/><rect x="17.60" y="5.87" width="1.17" height="1.17"/><rect x="22.29" y="5.87" width="1.17" height="1.17"/><rect x="24.64" y="5.87" width="2.35" height="1.17"/><rect x="31.68" y="5.87" width="1.17" height="1.17"/><rect x="35.20" y="5.87" width="3.52" height="1.17"/><rect x="39.89" y="5.87" width="1.17" height="1.17"/><rect x="46.93" y="5.87" width="1.17" height="1.17"/><rect x="0.00" y="7.04" width="8.21" height="1.17"/><rect x="9.39" y="7.04" width="3.52" height="1.17"/><rect x="14.08" y="7.04" width="2.35" height="1.17"/><rect x="18.77" y="7.04" width="1.17" height="1.17"/><rect x="23.46" y="7.04" width="1.17" height="1.17"/><rect x="25.81" y="7.04" width="2.35" height="1.17"/><rect x="34.02" y="7.04" width="1.17" height="1.17"/><rect x="39.89" y="7.04" width="8.21" height="1.17"/><rect x="9.39" y="8.21" width="2.35" height="1.17"/><rect x="15.25" y="8.21" width="1.17" height="1.17"/><rect x="18.77" y="8.21" width="1.17" height="1.17"/><rect x="22.29" y="8.21" width="1.17" height="1.17"/><rect x="24.64" y="8.21" width="2.35" height="1.17"/><rect x="29.33" y="8.21" width="2.35" height="1.17"/><rect x="32.85" y="8.21" width="3.52" height="1.17"/><rect x="37.54" y="8.21" width="1.17" height="1.17"/><rect x="2.35" y="9.39" width="3.52" height="1.17"/><rect x="7.04" y="9.39" width="3.52" height="1.17"/><rect x="12.90" y="9.39" width="2.35" height="1.17"/><rect x="18.77" y="9.39" width="2.35" height="1.17"/><rect x="22.29" y="9.39" width="2.35" height="1.17"/><rect x="28.16" y="9.39" width="1.17" height="1.17"/><rect x="30.50" y="9.39" width="1.17" height="1.17"/><rect x="32.85" y="9.39" width="2.35" height="1.17"/><rect x="37.54" y="9.39" width="2.35" height="1.17"/><rect x="41.06" y="9.39" width="7.04" height="1.17"/><rect x="0.00" y="10.56" width="1.17" height="1.17"/><rect x="2.35" y="10.56" width="1.17" height="1.17"/><rect x="4.69" y="10.56" width="5.87" height="1.17"/><rect x="12.90" y="10.56" width="2.35" height="1.17"/><rect x="16.42" y="10.56" width="1.17" height="1.17"/><rect x="18.77" y="10.56" width="2.35" height="1.17"/><rect x="22.29" y="10.56" width="1.17" height="1.17"/><rect x="26.98" y="10.56" width="1.17" height="1.17"/><rect x="31.68" y="10.56" width="5.87" height="1.17"/><rect x="38.71" y="10.56" width="3.52" height="1.17"/><rect x="45.75" y="10.56" width="2.35" height="1.17"/><rect x="0.00" y="11.73" width="5.87" height="1.17"/><rect x="9.39" y="11.73" width="1.17" height="1.17"/><rect x="11.73" y="11.73" width="5.87" height="1.17"/><rect x="18.77" y="11.73" width="1.17" height="1.17"/><rect x="21.12" y="11.73" width="9.39" height="1.17"/><rect x="37.54" y="11.73" width="2.35" height="1.17"/><rect x="41.06" y="11.73" width="1.17" height="1.17"/><rect x="44.58" y="11.73" width="1.17" height="1.17"/><rect x="3.52" y="12.90" width="1.17" height="1.17"/><rect x="15.25" y="12.90" width="5.87" height="1.17"/><rect x="26.98" y="12.90" width="2.35" height="1.17"/><rect x="35.20" y="12.90" width="1.17" height="1.17"/><rect x="37.54" y="12.90" width="3.52" height="1.17"/><rect x="42.23" y="12.90" width="1.17" height="1.17"/><rect x="45.75" y="12.90" width="2.35" height="1.17"/><rect x="0.00" y="14.08" width="1.17" height="1.17"/><rect x="5.87" y="14.08" width="3.52" height="1.17"/><rect x="10.56" y="14.08" width="1.17" height="1.17"/><rect x="12.90" y="14.08" width="3.52" height="1.17"/><rect x="19.94" y="14.08" width="1.17" height="1.17"/><rect x="22.29" y="14.08" width="3.52" height="1.17"/><rect x="26.98" y="14.08" width="1.17" height="1.17"/><rect x="30.50" y="14.08" width="2.35" height="1.17"/><rect x="35.20" y="14.08" width="3.52" height="1.17"/><rect x="39.89" y="14.08" width="1.17" height="1.17"/><rect x="42.23" y="14.08" width="1.17" height="1.17"/><rect x="45.75" y="14.08" width="1.17" height="1.17"/><rect x="3.52" y="15.25" width="1.17" height="1.17"/><rect x="5.87" y="15.25" width="10.56" height="1.17"/><rect x="17.60" y="15.25" width="1.17" height="1.17"/><rect x="21.12" y="15.25" width="1.17" height="1.17"/><rect x="25.81" y="15.25" width="3.52" height="1.17"/><rect x="31.68" y="15.25" width="5.87" height="1.17"/><rect x="38.71" y="15.25" width="1.17" height="1.17"/><rect x="41.06" y="15.25" width="2.35" height="1.17"/><rect x="44.58" y="15.25" width="2.35" height="1.17"/><rect x="8.21" y="16.42" width="1.17" height="1.17"/><rect x="10.56" y="16.42" width="1.17" height="1.17"/><rect x="14.08" y="16.42" width="2.35" height="1.17"/><rect x="17.60" y="16.42" width="4.69" height="1.17"/><rect x="24.64" y="16.42" width="1.17" height="1.17"/><rect x="26.98" y="16.42" width="1.17" height="1.17"/><rect x="29.33" y="16.42" width="4.69" height="1.17"/><rect x="35.20" y="16.42" width="2.35" height="1.17"/><rect x="39.89" y="16.42" width="8.21" height="1.17"/><rect x="0.00" y="17.60" width="1.17" height="1.17"/><rect x="4.69" y="17.60" width="2.35" height="1.17"/><rect x="8.21" y="17.60" width="4.69" height="1.17"/><rect x="14.08" y="17.60" width="1.17" height="1.17"/><rect x="18.77" y="17.60" width="5.87" height="1.17"/><rect x="28.16" y="17.60" width="2.35" height="1.17"/><rect x="32.85" y="17.60" width="1.17" height="1.17"/><rect x="35.20" y="17.60" width="2.35" height="1.17"/><rect x="42.23" y="17.60" width="3.52" height="1.17"/><rect x="4.69" y="18.77" width="1.17" height="1.17"/><rect x="7.04" y="18.77" width="1.17" height="1.17"/><rect x="9.39" y="18.77" width="1.17" height="1.17"/><rect x="12.90" y="18.77" width="3.52" height="1.17"/><rect x="18.77" y="18.77" width="2.35" height="1.17"/><rect x="23.46" y="18.77" width="2.35" height="1.17"/><rect x="26.98" y="18.77" width="3.52" height="1.17"/><rect x="34.02" y="18.77" width="3.52" height="1.17"/><rect x="39.89" y="18.77" width="3.52" height="1.17"/><rect x="44.58" y="18.77" width="2.35" height="1.17"/><rect x="1.17" y="19.94" width="4.69" height="1.17"/><rect x="7.04" y="19.94" width="1.17" height="1.17"/><rect x="11.73" y="19.94" width="1.17" height="1.17"/><rect x="14.08" y="19.94" width="1.17" height="1.17"/><rect x="16.42" y="19.94" width="2.35" height="1.17"/><rect x="19.94" y="19.94" width="1.17" height="1.17"/><rect x="22.29" y="19.94" width="4.69" height="1.17"/><rect x="29.33" y="19.94" width="3.52" height="1.17"/><rect x="34.02" y="19.94" width="4.69" height="1.17"/><rect x="44.58" y="19.94" width="2.35" height="1.17"/><rect x="1.17" y="21.12" width="1.17" height="1.17"/><rect x="3.52" y="21.12" width="8.21" height="1.17"/><rect x="12.90" y="21.12" width="1.17" height="1.17"/><rect x="15.25" y="21.12" width="2.35" height="1.17"/><rect x="19.94" y="21.12" width="4.69" height="1.17"/><rect x="25.81" y="21.12" width="2.35" height="1.17"/><rect x="29.33" y="21.12" width="2.35" height="1.17"/><rect x="34.02" y="21.12" width="3.52" height="1.17"/><rect x="38.71" y="21.12" width="1.17" height="1.17"/><rect x="42.23" y="21.12" width="2.35" height="1.17"/><rect x="46.93" y="21.12" width="1.17" height="1.17"/><rect x="1.17" y="22.29" width="3.52" height="1.17"/><rect x="9.39" y="22.29" width="3.52" height="1.17"/><rect x="15.25" y="22.29" width="4.69" height="1.17"/><rect x="21.12" y="22.29" width="1.17" height="1.17"/><rect x="28.16" y="22.29" width="3.52" height="1.17"/><rect x="32.85" y="22.29" width="2.35" height="1.17"/><rect x="36.37" y="22.29" width="3.52" height="1.17"/><rect x="41.06" y="22.29" width="1.17" height="1.17"/><rect x="45.75" y="22.29" width="2.35" height="1.17"/><rect x="0.00" y="23.46" width="2.35" height="1.17"/><rect x="3.52" y="23.46" width="3.52" height="1.17"/><rect x="12.90" y="23.46" width="1.17" height="1.17"/><rect x="15.25" y="23.46" width="1.17" height="1.17"/><rect x="17.60" y="23.46" width="1.17" height="1.17"/><rect x="19.94" y="23.46" width="4.69" height="1.17"/><rect x="26.98" y="23.46" width="2.35" height="1.17"/><rect x="31.68" y="23.46" width="1.17" height="1.17"/><rect x="36.37" y="23.46" width="2.35" height="1.17"/><rect x="42.23" y="23.46" width="4.69" height="1.17"/><rect x="2.35" y="24.64" width="1.17" height="1.17"/><rect x="4.69" y="24.64" width="2.35" height="1.17"/><rect x="9.39" y="24.64" width="1.17" height="1.17"/><rect x="12.90" y="24.64" width="5.87" height="1.17"/><rect x="21.12" y="24.64" width="3.52" height="1.17"/><rect x="25.81" y="24.64" width="3.52" height="1.17"/><rect x="31.68" y="24.64" width="3.52" height="1.17"/><rect x="37.54" y="24.64" width="2.35" height="1.17"/><rect x="41.06" y="24.64" width="3.52" height="1.17"/><rect x="45.75" y="24.64" width="1.17" height="1.17"/><rect x="0.00" y="25.81" width="2.35" height="1.17"/><rect x="4.69" y="25.81" width="2.35" height="1.17"/><rect x="8.21" y="25.81" width="2.35" height="1.17"/><rect x="11.73" y="25.81" width="1.17" height="1.17"/><rect x="14.08" y="25.81" width="1.17" height="1.17"/><rect x="16.42" y="25.81" width="3.52" height="1.17"/><rect x="23.46" y="25.81" width="1.17" height="1.17"/><rect x="25.81" y="25.81" width="1.17" height="1.17"/><rect x="28.16" y="25.81" width="2.35" height="1.17"/><rect x="32.85" y="25.81" width="2.35" height="1.17"/><rect x="37.54" y="25.81" width="2.35" height="1.17"/><rect x="42.23" y="25.81" width="2.35" height="1.17"/><rect x="45.75" y="25.81" width="1.17" height="1.17"/><rect x="2.35" y="26.98" width="1.17" height="1.17"/><rect x="4.69" y="26.98" width="2.35" height="1.17"/><rect x="9.39" y="26.98" width="3.52" height="1.17"/><rect x="14.08" y="26.98" width="3.52" height="1.17"/><rect x="19.94" y="26.98" width="1.17" height="1.17"/><rect x="23.46" y="26.98" width="1.17" height="1.17"/><rect x="25.81" y="26.98" width="1.17" height="1.17"/><rect x="30.50" y="26.98" width="2.35" height="1.17"/><rect x="34.02" y="26.98" width="1.17" height="1.17"/><rect x="36.37" y="26.98" width="3.52" height="1.17"/><rect x="41.06" y="26.98" width="2.35" height="1.17"/><rect x="45.75" y="26.98" width="2.35" height="1.17"/><rect x="0.00" y="28.16" width="7.04" height="1.17"/><rect x="8.21" y="28.16" width="1.17" height="1.17"/><rect x="10.56" y="28.16" width="1.17" height="1.17"/><rect x="15.25" y="28.16" width="1.17" height="1.17"/><rect x="17.60" y="28.16" width="1.17" height="1.17"/><rect x="19.94" y="28.16" width="1.17" height="1.17"/><rect x="25.81" y="28.16" width="1.17" height="1.17"/><rect x="28.16" y="28.16" width="1.17" height="1.17"/><rect x="31.68" y="28.16" width="1.17" height="1.17"/><rect x="35.20" y="28.16" width="2.35" height="1.17"/><rect x="38.71" y="28.16" width="1.17" height="1.17"/><rect x="41.06" y="28.16" width="1.17" height="1.17"/><rect x="43.41" y="28.16" width="1.17" height="1.17"/><rect x="46.93" y="28.16" width="1.17" height="1.17"/><rect x="0.00" y="29.33" width="1.17" height="1.17"/><rect x="2.35" y="29.33" width="4.69" height="1.17"/><rect x="10.56" y="29.33" width="1.17" height="1.17"/><rect x="12.90" y="29.33" width="1.17" height="1.17"/><rect x="16.42" y="29.33" width="1.17" height="1.17"/><rect x="22.29" y="29.33" width="1.17" height="1.17"/><rect x="25.81" y="29.33" width="1.17" height="1.17"/><rect x="28.16" y="29.33" width="1.17" height="1.17"/><rect x="31.68" y="29.33" width="1.17" height="1.17"/><rect x="34.02" y="29.33" width="2.35" height="1.17"/><rect x="37.54" y="29.33" width="1.17" height="1.17"/><rect x="39.89" y="29.33" width="1.17" height="1.17"/><rect x="45.75" y="29.33" width="2.35" height="1.17"/><rect x="0.00" y="30.50" width="2.35" height="1.17"/><rect x="3.52" y="30.50" width="1.17" height="1.17"/><rect x="7.04" y="30.50" width="2.35" height="1.17"/><rect x="10.56" y="30.50" width="7.04" height="1.17"/><rect x="19.94" y="30.50" width="1.17" height="1.17"/><rect x="22.29" y="30.50" width="2.35" height="1.17"/><rect x="25.81" y="30.50" width="3.52" height="1.17"/><rect x="32.85" y="30.50" width="3.52" height="1.17"/><rect x="38.71" y="30.50" width="1.17" height="1.17"/><rect x="41.06" y="30.50" width="1.17" height="1.17"/><rect x="44.58" y="30.50" width="1.17" height="1.17"/><rect x="46.93" y="30.50" width="1.17" height="1.17"/><rect x="1.17" y="31.68" width="3.52" height="1.17"/><rect x="5.87" y="31.68" width="1.17" height="1.17"/><rect x="9.39" y="31.68" width="2.35" height="1.17"/><rect x="16.42" y="31.68" width="4.69" height="1.17"/><rect x="24.64" y="31.68" width="1.17" height="1.17"/><rect x="28.16" y="31.68" width="1.17" height="1.17"/><rect x="30.50" y="31.68" width="7.04" height="1.17"/><rect x="42.23" y="31.68" width="1.17" height="1.17"/><rect x="44.58" y="31.68" width="1.17" height="1.17"/><rect x="0.00" y="32.85" width="1.17" height="1.17"/><rect x="3.52" y="32.85" width="1.17" height="1.17"/><rect x="5.87" y="32.85" width="3.52" height="1.17"/><rect x="12.90" y="32.85" width="1.17" height="1.17"/><rect x="15.25" y="32.85" width="2.35" height="1.17"/><rect x="23.46" y="32.85" width="1.17" height="1.17"/><rect x="28.16" y="32.85" width="1.17" height="1.17"/><rect x="31.68" y="32.85" width="2.35" height="1.17"/><rect x="35.20" y="32.85" width="1.17" height="1.17"/><rect x="37.54" y="32.85" width="3.52" height="1.17"/><rect x="42.23" y="32.85" width="4.69" height="1.17"/><rect x="3.52" y="34.02" width="1.17" height="1.17"/><rect x="5.87" y="34.02" width="1.17" height="1.17"/><rect x="10.56" y="34.02" width="1.17" height="1.17"/><rect x="15.25" y="34.02" width="4.69" height="1.17"/><rect x="25.81" y="34.02" width="3.52" height="1.17"/><rect x="30.50" y="34.02" width="7.04" height="1.17"/><rect x="38.71" y="34.02" width="2.35" height="1.17"/><rect x="45.75" y="34.02" width="2.35" height="1.17"/><rect x="0.00" y="35.20" width="1.17" height="1.17"/><rect x="2.35" y="35.20" width="1.17" height="1.17"/><rect x="5.87" y="35.20" width="1.17" height="1.17"/><rect x="8.21" y="35.20" width="1.17" height="1.17"/><rect x="10.56" y="35.20" width="3.52" height="1.17"/><rect x="16.42" y="35.20" width="3.52" height="1.17"/><rect x="21.12" y="35.20" width="3.52" height="1.17"/><rect x="25.81" y="35.20" width="1.17" height="1.17"/><rect x="28.16" y="35.20" width="2.35" height="1.17"/><rect x="31.68" y="35.20" width="2.35" height="1.17"/><rect x="35.20" y="35.20" width="1.17" height="1.17"/><rect x="41.06" y="35.20" width="3.52" height="1.17"/><rect x="45.75" y="35.20" width="1.17" height="1.17"/><rect x="0.00" y="36.37" width="3.52" height="1.17"/><rect x="5.87" y="36.37" width="1.17" height="1.17"/><rect x="8.21" y="36.37" width="2.35" height="1.17"/><rect x="15.25" y="36.37" width="3.52" height="1.17"/><rect x="22.29" y="36.37" width="2.35" height="1.17"/><rect x="26.98" y="36.37" width="2.35" height="1.17"/><rect x="30.50" y="36.37" width="3.52" height="1.17"/><rect x="36.37" y="36.37" width="4.69" height="1.17"/><rect x="42.23" y="36.37" width="3.52" height="1.17"/><rect x="0.00" y="37.54" width="1.17" height="1.17"/><rect x="2.35" y="37.54" width="2.35" height="1.17"/><rect x="8.21" y="37.54" width="2.35" height="1.17"/><rect x="11.73" y="37.54" width="5.87" height="1.17"/><rect x="22.29" y="37.54" width="2.35" height="1.17"/><rect x="25.81" y="37.54" width="1.17" height="1.17"/><rect x="29.33" y="37.54" width="1.17" height="1.17"/><rect x="32.85" y="37.54" width="2.35" height="1.17"/><rect x="43.41" y="37.54" width="2.35" height="1.17"/><rect x="46.93" y="37.54" width="1.17" height="1.17"/><rect x="9.39" y="38.71" width="1.17" height="1.17"/><rect x="12.90" y="38.71" width="1.17" height="1.17"/><rect x="16.42" y="38.71" width="2.35" height="1.17"/><rect x="19.94" y="38.71" width="1.17" height="1.17"/><rect x="22.29" y="38.71" width="1.17" height="1.17"/><rect x="26.98" y="38.71" width="1.17" height="1.17"/><rect x="36.37" y="38.71" width="1.17" height="1.17"/><rect x="38.71" y="38.71" width="1.17" height="1.17"/><rect x="41.06" y="38.71" width="1.17" height="1.17"/><rect x="43.41" y="38.71" width="1.17" height="1.17"/><rect x="45.75" y="38.71" width="2.35" height="1.17"/><rect x="0.00" y="39.89" width="8.21" height="1.17"/><rect x="9.39" y="39.89" width="1.17" height="1.17"/><rect x="14.08" y="39.89" width="1.17" height="1.17"/><rect x="16.42" y="39.89" width="3.52" height="1.17"/><rect x="23.46" y="39.89" width="1.17" height="1.17"/><rect x="25.81" y="39.89" width="1.17" height="1.17"/><rect x="28.16" y="39.89" width="1.17" height="1.17"/><rect x="32.85" y="39.89" width="2.35" height="1.17"/><rect x="36.37" y="39.89" width="1.17" height="1.17"/><rect x="38.71" y="39.89" width="1.17" height="1.17"/><rect x="41.06" y="39.89" width="7.04" height="1.17"/><rect x="0.00" y="41.06" width="1.17" height="1.17"/><rect x="7.04" y="41.06" width="1.17" height="1.17"/><rect x="9.39" y="41.06" width="1.17" height="1.17"/><rect x="12.90" y="41.06" width="1.17" height="1.17"/><rect x="17.60" y="41.06" width="1.17" height="1.17"/><rect x="21.12" y="41.06" width="2.35" height="1.17"/><rect x="25.81" y="41.06" width="4.69" height="1.17"/><rect x="31.68" y="41.06" width="2.35" height="1.17"/><rect x="36.37" y="41.06" width="1.17" height="1.17"/><rect x="45.75" y="41.06" width="1.17" height="1.17"/><rect x="0.00" y="42.23" width="1.17" height="1.17"/><rect x="2.35" y="42.23" width="3.52" height="1.17"/><rect x="7.04" y="42.23" width="1.17" height="1.17"/><rect x="9.39" y="42.23" width="7.04" height="1.17"/><rect x="18.77" y="42.23" width="1.17" height="1.17"/><rect x="21.12" y="42.23" width="1.17" height="1.17"/><rect x="25.81" y="42.23" width="2.35" height="1.17"/><rect x="29.33" y="42.23" width="1.17" height="1.17"/><rect x="32.85" y="42.23" width="1.17" height="1.17"/><rect x="37.54" y="42.23" width="1.17" height="1.17"/><rect x="41.06" y="42.23" width="1.17" height="1.17"/><rect x="43.41" y="42.23" width="1.17" height="1.17"/><rect x="46.93" y="42.23" width="1.17" height="1.17"/><rect x="0.00" y="43.41" width="1.17" height="1.17"/><rect x="2.35" y="43.41" width="3.52" height="1.17"/><rect x="7.04" y="43.41" width="1.17" height="1.17"/><rect x="11.73" y="43.41" width="1.17" height="1.17"/><rect x="14.08" y="43.41" width="1.17" height="1.17"/><rect x="16.42" y="43.41" width="1.17" height="1.17"/><rect x="22.29" y="43.41" width="3.52" height="1.17"/><rect x="29.33" y="43.41" width="1.17" height="1.17"/><rect x="34.02" y="43.41" width="4.69" height="1.17"/><rect x="0.00" y="44.58" width="1.17" height="1.17"/><rect x="2.35" y="44.58" width="3.52" height="1.17"/><rect x="7.04" y="44.58" width="1.17" height="1.17"/><rect x="9.39" y="44.58" width="2.35" height="1.17"/><rect x="15.25" y="44.58" width="1.17" height="1.17"/><rect x="19.94" y="44.58" width="5.87" height="1.17"/><rect x="28.16" y="44.58" width="1.17" height="1.17"/><rect x="30.50" y="44.58" width="2.35" height="1.17"/><rect x="36.37" y="44.58" width="3.52" height="1.17"/><rect x="43.41" y="44.58" width="3.52" height="1.17"/><rect x="0.00" y="45.75" width="1.17" height="1.17"/><rect x="7.04" y="45.75" width="1.17" height="1.17"/><rect x="10.56" y="45.75" width="2.35" height="1.17"/><rect x="14.08" y="45.75" width="1.17" height="1.17"/><rect x="16.42" y="45.75" width="2.35" height="1.17"/><rect x="23.46" y="45.75" width="1.17" height="1.17"/><rect x="26.98" y="45.75" width="1.17" height="1.17"/><rect x="29.33" y="45.75" width="1.17" height="1.17"/><rect x="32.85" y="45.75" width="2.35" height="1.17"/><rect x="37.54" y="45.75" width="2.35" height="1.17"/><rect x="41.06" y="45.75" width="1.17" height="1.17"/><rect x="43.41" y="45.75" width="3.52" height="1.17"/><rect x="0.00" y="46.93" width="8.21" height="1.17"/><rect x="9.39" y="46.93" width="1.17" height="1.17"/><rect x="15.25" y="46.93" width="2.35" height="1.17"/><rect x="21.12" y="46.93" width="1.17" height="1.17"/><rect x="26.98" y="46.93" width="2.35" height="1.17"/><rect x="30.50" y="46.93" width="1.17" height="1.17"/><rect x="36.37" y="46.93" width="4.69" height="1.17"/><rect x="44.58" y="46.93" width="1.17" height="1.17"/></g></svg><div class="t" style="left:557.40px;top:825.00px;font-size:7.6px;line-height:7.6px;font-family:'Liberation Sans', sans-serif;font-weight:normal;color:#333;letter-spacing:0.027px;">Seite 1/1</div></div>
<div class="r thumb" style="left:42.5px;top:157.3px;width:607px;height:859px;transform:scale(0.27);transform-origin:0 0;overflow:hidden;will-change:transform"><div class="t" style="left:528.50px;top:22.00px;font-size:9.6px;line-height:9.6px;font-family:'Liberation Sans', sans-serif;font-weight:bold;color:#000;letter-spacing:0.174px;">Musterfirma</div><div class="t" style="left:67.20px;top:141.00px;font-size:8px;line-height:8px;font-family:'Liberation Sans', sans-serif;font-weight:normal;color:#333;letter-spacing:0.021px;">Musterfirma - -</div><div class="r" style="left:67px;top:148px;width:55px;height:2.2px;background:#222"></div><div class="t" style="left:67.30px;top:153.00px;font-size:9.6px;line-height:9.6px;font-family:'Liberation Sans', sans-serif;font-weight:normal;color:#000;letter-spacing:-0.283px;">Bodenfelde GmbH</div><div class="t" style="left:67.30px;top:174.00px;font-size:9.6px;line-height:9.6px;font-family:'Liberation Sans', sans-serif;font-weight:normal;color:#000;letter-spacing:-0.236px;">Bodenfelde Str. 37</div><div class="t" style="left:67.30px;top:184.00px;font-size:9.6px;line-height:9.6px;font-family:'Liberation Sans', sans-serif;font-weight:normal;color:#000;letter-spacing:-0.310px;">37194 Bodenfelde</div><div class="t" style="left:404.60px;top:192.00px;font-size:9.6px;line-height:9.6px;font-family:'Liberation Sans', sans-serif;font-weight:normal;color:#000;letter-spacing:0.331px;">Kunden Nr.:</div><div class="t" style="left:495.10px;top:192.00px;font-size:9.6px;line-height:9.6px;font-family:'Liberation Sans', sans-serif;font-weight:bold;color:#000;letter-spacing:-0.097px;">10016</div><div class="t" style="left:404.60px;top:204.00px;font-size:9.6px;line-height:9.6px;font-family:'Liberation Sans', sans-serif;font-weight:normal;color:#000;letter-spacing:0.233px;">RechnungsNr.:</div><div class="t" style="left:495.10px;top:204.00px;font-size:9.6px;line-height:9.6px;font-family:'Liberation Sans', sans-serif;font-weight:bold;color:#000;letter-spacing:0.000px;">3</div><div class="t" style="left:404.60px;top:214.00px;font-size:9.6px;line-height:9.6px;font-family:'Liberation Sans', sans-serif;font-weight:normal;color:#000;letter-spacing:0.293px;">Rechnungsdatum:</div><div class="t" style="left:495.10px;top:214.00px;font-size:9.6px;line-height:9.6px;font-family:'Liberation Sans', sans-serif;font-weight:normal;color:#000;letter-spacing:0.084px;">04.04.2026</div><div class="t" style="left:404.60px;top:226.00px;font-size:9.6px;line-height:9.6px;font-family:'Liberation Sans', sans-serif;font-weight:normal;color:#000;letter-spacing:0.039px;">Lieferdatum:</div><div class="t" style="left:495.10px;top:226.00px;font-size:9.6px;line-height:9.6px;font-family:'Liberation Sans', sans-serif;font-weight:normal;color:#000;letter-spacing:0.084px;">04.04.2026</div><div class="t" style="left:40.40px;top:265.00px;font-size:13.8px;line-height:13.8px;font-family:'Liberation Sans', sans-serif;font-weight:bold;color:#000;letter-spacing:0.217px;">Rechnung</div><div class="r" style="left:0px;top:286px;width:24px;height:2.2px;background:#333"></div><div class="t" style="left:46.40px;top:291.00px;font-size:9.6px;line-height:9.6px;font-family:'Liberation Sans', sans-serif;font-weight:bold;color:#000;letter-spacing:-0.558px;">Pos</div><div class="t" style="left:77.10px;top:291.00px;font-size:9.6px;line-height:9.6px;font-family:'Liberation Sans', sans-serif;font-weight:bold;color:#000;letter-spacing:-0.197px;">ArtikelNr.</div><div class="t" style="left:126.80px;top:291.00px;font-size:9.6px;line-height:9.6px;font-family:'Liberation Sans', sans-serif;font-weight:bold;color:#000;letter-spacing:-0.186px;">Artikelbezeichnung</div><div class="t" style="left:313.10px;top:291.00px;font-size:9.6px;line-height:9.6px;font-family:'Liberation Sans', sans-serif;font-weight:bold;color:#000;letter-spacing:-0.218px;">Anzahl</div><div class="t" style="left:347.40px;top:291.00px;font-size:9.6px;line-height:9.6px;font-family:'Liberation Sans', sans-serif;font-weight:bold;color:#000;letter-spacing:-0.117px;">Inhalt</div><div class="t" style="left:386.60px;top:291.00px;font-size:9.6px;line-height:9.6px;font-family:'Liberation Sans', sans-serif;font-weight:bold;color:#000;letter-spacing:-0.471px;">Menge</div><div class="t" style="left:436.60px;top:291.00px;font-size:9.6px;line-height:9.6px;font-family:'Liberation Sans', sans-serif;font-weight:bold;color:#000;letter-spacing:-0.543px;">Preis</div><div class="t" style="left:473.40px;top:291.00px;font-size:9.6px;line-height:9.6px;font-family:'Liberation Sans', sans-serif;font-weight:bold;color:#000;letter-spacing:-0.171px;">Rabatt</div><div class="t" style="left:520.50px;top:291.00px;font-size:9.6px;line-height:9.6px;font-family:'Liberation Sans', sans-serif;font-weight:bold;color:#000;letter-spacing:-0.398px;">Endpreis</div><div class="t" style="left:574.00px;top:291.00px;font-size:9.6px;line-height:9.6px;font-family:'Liberation Sans', sans-serif;font-weight:bold;color:#000;letter-spacing:-0.200px;">MS</div><div class="r" style="left:41px;top:302.5px;width:548px;height:3.5200000000000005px;background:#000"></div><div class="t" style="left:51.84px;top:305.00px;font-size:9.6px;line-height:9.6px;font-family:'Liberation Sans', sans-serif;font-weight:normal;color:#000;letter-spacing:0.000px;">1</div><div class="t" style="left:95.34px;top:305.00px;font-size:9.6px;line-height:9.6px;font-family:'Liberation Sans', sans-serif;font-weight:normal;color:#000;letter-spacing:0.000px;">1</div><div class="t" style="left:126.80px;top:305.00px;font-size:9.6px;line-height:9.6px;font-family:'Liberation Sans', sans-serif;font-weight:normal;color:#000;letter-spacing:-0.174px;">Knorr 1 Stck.</div><div class="t" style="left:320.55px;top:305.00px;font-size:9.6px;line-height:9.6px;font-family:'Liberation Sans', sans-serif;font-weight:normal;color:#000;letter-spacing:-0.400px;">10,00</div><div class="t" style="left:361.74px;top:305.00px;font-size:9.6px;line-height:9.6px;font-family:'Liberation Sans', sans-serif;font-weight:normal;color:#000;letter-spacing:-0.400px;">30</div><div class="t" style="left:387.62px;top:305.00px;font-size:9.6px;line-height:9.6px;font-family:'Liberation Sans', sans-serif;font-weight:normal;color:#000;letter-spacing:-0.400px;">300,00</div><div class="t" style="left:440.53px;top:305.00px;font-size:9.6px;line-height:9.6px;font-family:'Liberation Sans', sans-serif;font-weight:normal;color:#000;letter-spacing:-0.400px;">4,00</div><div class="t" style="left:526.70px;top:305.00px;font-size:9.6px;line-height:9.6px;font-family:'Liberation Sans', sans-serif;font-weight:normal;color:#000;letter-spacing:-0.400px;">1200,00</div><div class="t" style="left:574.53px;top:305.00px;font-size:9.6px;line-height:9.6px;font-family:'Liberation Sans', sans-serif;font-weight:normal;color:#000;letter-spacing:-0.400px;">7%</div><div class="r" style="left:41px;top:315px;width:548px;height:2.2px;background:#a2a2a2"></div><div class="t" style="left:51.84px;top:317.00px;font-size:9.6px;line-height:9.6px;font-family:'Liberation Sans', sans-serif;font-weight:normal;color:#000;letter-spacing:0.000px;">2</div><div class="t" style="left:95.34px;top:317.00px;font-size:9.6px;line-height:9.6px;font-family:'Liberation Sans', sans-serif;font-weight:normal;color:#000;letter-spacing:0.000px;">3</div><div class="t" style="left:126.80px;top:317.00px;font-size:9.6px;line-height:9.6px;font-family:'Liberation Sans', sans-serif;font-weight:normal;color:#000;letter-spacing:-0.173px;">Allzweckreiniger 1 Stck.</div><div class="t" style="left:325.53px;top:317.00px;font-size:9.6px;line-height:9.6px;font-family:'Liberation Sans', sans-serif;font-weight:normal;color:#000;letter-spacing:-0.400px;">2,00</div><div class="t" style="left:366.67px;top:317.00px;font-size:9.6px;line-height:9.6px;font-family:'Liberation Sans', sans-serif;font-weight:normal;color:#000;letter-spacing:-0.400px;">1</div><div class="t" style="left:397.53px;top:317.00px;font-size:9.6px;line-height:9.6px;font-family:'Liberation Sans', sans-serif;font-weight:normal;color:#000;letter-spacing:-0.400px;">2,00</div><div class="t" style="left:440.53px;top:317.00px;font-size:9.6px;line-height:9.6px;font-family:'Liberation Sans', sans-serif;font-weight:normal;color:#000;letter-spacing:-0.400px;">1,94</div><div class="t" style="left:541.53px;top:317.00px;font-size:9.6px;line-height:9.6px;font-family:'Liberation Sans', sans-serif;font-weight:normal;color:#000;letter-spacing:-0.400px;">3,88</div><div class="t" style="left:569.60px;top:317.00px;font-size:9.6px;line-height:9.6px;font-family:'Liberation Sans', sans-serif;font-weight:normal;color:#000;letter-spacing:-0.400px;">19%</div><div class="r" style="left:41px;top:328px;width:548px;height:2.2px;background:#a2a2a2"></div><div class="t" style="left:51.84px;top:329.00px;font-size:9.6px;line-height:9.6px;font-family:'Liberation Sans', sans-serif;font-weight:normal;color:#000;letter-spacing:0.000px;">3</div><div class="t" style="left:95.34px;top:329.00px;font-size:9.6px;line-height:9.6px;font-family:'Liberation Sans', sans-serif;font-weight:normal;color:#000;letter-spacing:0.000px;">6</div><div class="t" style="left:126.80px;top:329.00px;font-size:9.6px;line-height:9.6px;font-family:'Liberation Sans', sans-serif;font-weight:normal;color:#000;letter-spacing:-0.134px;">Alufolie 1 Stck.</div><div class="t" style="left:320.55px;top:329.00px;font-size:9.6px;line-height:9.6px;font-family:'Liberation Sans', sans-serif;font-weight:normal;color:#000;letter-spacing:-0.400px;">20,00</div><div class="t" style="left:366.67px;top:329.00px;font-size:9.6px;line-height:9.6px;font-family:'Liberation Sans', sans-serif;font-weight:normal;color:#000;letter-spacing:-0.400px;">1</div><div class="t" style="left:392.55px;top:329.00px;font-size:9.6px;line-height:9.6px;font-family:'Liberation Sans', sans-serif;font-weight:normal;color:#000;letter-spacing:-0.400px;">20,00</div><div class="t" style="left:440.53px;top:329.00px;font-size:9.6px;line-height:9.6px;font-family:'Liberation Sans', sans-serif;font-weight:normal;color:#000;letter-spacing:-0.400px;">7,87</div><div class="t" style="left:531.62px;top:329.00px;font-size:9.6px;line-height:9.6px;font-family:'Liberation Sans', sans-serif;font-weight:normal;color:#000;letter-spacing:-0.400px;">157,40</div><div class="t" style="left:569.60px;top:329.00px;font-size:9.6px;line-height:9.6px;font-family:'Liberation Sans', sans-serif;font-weight:normal;color:#000;letter-spacing:-0.400px;">19%</div><div class="r" style="left:41px;top:340px;width:548px;height:2.2px;background:#a2a2a2"></div><div class="t" style="left:235.90px;top:341.00px;font-size:9.6px;line-height:9.6px;font-family:'Liberation Sans', sans-serif;font-weight:normal;color:#000;letter-spacing:-0.388px;">Gesamtanzahl:</div><div class="t" style="left:320.55px;top:341.00px;font-size:9.6px;line-height:9.6px;font-family:'Liberation Sans', sans-serif;font-weight:normal;color:#000;letter-spacing:-0.400px;">32,00</div><div class="t" style="left:42.60px;top:367.00px;font-size:8.1px;line-height:8.1px;font-family:'Liberation Mono', monospace;font-weight:normal;color:#3a3a3a;letter-spacing:0.000px;">LGNAME&nbsp;&nbsp;&nbsp;&nbsp;&nbsp;&nbsp;&nbsp;&nbsp;&nbsp;&nbsp;&nbsp;&nbsp;&nbsp;&nbsp;&nbsp;&nbsp;SALDO&nbsp;&nbsp;ANZLF&nbsp;&nbsp;ANZRG&nbsp;&nbsp;SALDO&nbsp;&nbsp;&nbsp;&nbsp;PREIS&nbsp;&nbsp;&nbsp;&nbsp;&nbsp;&nbsp;BETRAG&nbsp;&nbsp;SS</div><div class="r" style="left:43px;top:379px;width:354.8px;height:1px;background:repeating-linear-gradient(90deg,#3a3a3a 0 3.6px,rgba(0,0,0,0) 3.6px 4.86px)"></div><div class="t" style="left:42.60px;top:384.00px;font-size:8.1px;line-height:8.1px;font-family:'Liberation Mono', monospace;font-weight:normal;color:#3a3a3a;letter-spacing:0.000px;">EURO&nbsp;PFANDKISTE&nbsp;&nbsp;H/M&nbsp;&nbsp;&nbsp;&nbsp;&nbsp;&nbsp;0&nbsp;&nbsp;&nbsp;&nbsp;&nbsp;&nbsp;5&nbsp;&nbsp;&nbsp;&nbsp;&nbsp;&nbsp;&nbsp;&nbsp;&nbsp;&nbsp;&nbsp;&nbsp;&nbsp;5&nbsp;&nbsp;&nbsp;&nbsp;&nbsp;3,32&nbsp;&nbsp;&nbsp;&nbsp;&nbsp;&nbsp;&nbsp;16,60&nbsp;&nbsp;19</div><div class="t" style="left:42.60px;top:393.00px;font-size:8.1px;line-height:8.1px;font-family:'Liberation Mono', monospace;font-weight:normal;color:#3a3a3a;letter-spacing:0.000px;">EURO&nbsp;PFANDKISTE&nbsp;&nbsp;&nbsp;T&nbsp;&nbsp;&nbsp;&nbsp;&nbsp;&nbsp;&nbsp;0&nbsp;&nbsp;&nbsp;&nbsp;&nbsp;&nbsp;&nbsp;&nbsp;&nbsp;&nbsp;&nbsp;&nbsp;10&nbsp;&nbsp;&nbsp;&nbsp;-10&nbsp;&nbsp;&nbsp;&nbsp;&nbsp;0,77&nbsp;&nbsp;&nbsp;&nbsp;&nbsp;&nbsp;&nbsp;-7,70&nbsp;&nbsp;19</div><div class="t" style="left:42.60px;top:402.00px;font-size:8.1px;line-height:8.1px;font-family:'Liberation Mono', monospace;font-weight:normal;color:#3a3a3a;letter-spacing:0.000px;">CHAMPIGNONS&nbsp;KISTE&nbsp;&nbsp;&nbsp;&nbsp;&nbsp;&nbsp;&nbsp;&nbsp;&nbsp;0&nbsp;&nbsp;&nbsp;&nbsp;&nbsp;15&nbsp;&nbsp;&nbsp;&nbsp;&nbsp;&nbsp;&nbsp;&nbsp;&nbsp;&nbsp;&nbsp;&nbsp;15&nbsp;&nbsp;&nbsp;&nbsp;&nbsp;0,50&nbsp;&nbsp;&nbsp;&nbsp;&nbsp;&nbsp;&nbsp;&nbsp;7,50&nbsp;&nbsp;19</div><div class="t" style="left:42.60px;top:410.00px;font-size:8.1px;line-height:8.1px;font-family:'Liberation Mono', monospace;font-weight:normal;color:#3a3a3a;letter-spacing:0.000px;">EURO&nbsp;PALETTEN&nbsp;&nbsp;&nbsp;&nbsp;&nbsp;&nbsp;&nbsp;&nbsp;&nbsp;&nbsp;&nbsp;&nbsp;&nbsp;0&nbsp;&nbsp;&nbsp;&nbsp;&nbsp;20&nbsp;&nbsp;&nbsp;&nbsp;&nbsp;&nbsp;&nbsp;&nbsp;&nbsp;&nbsp;&nbsp;&nbsp;20&nbsp;&nbsp;&nbsp;&nbsp;&nbsp;5,00&nbsp;&nbsp;&nbsp;&nbsp;&nbsp;&nbsp;100,00&nbsp;&nbsp;19</div><div class="t" style="left:46.30px;top:720.00px;font-size:9.6px;line-height:9.6px;font-family:'Liberation Sans', sans-serif;font-weight:bold;color:#000;letter-spacing:-0.207px;">Gesamtoffen: 3835,95 EUR</div><div class="t" style="left:60.00px;top:735.00px;font-size:9.6px;line-height:9.6px;font-family:'Liberation Sans', sans-serif;font-weight:bold;color:#000;letter-spacing:-0.215px;">Warenwert</div><div class="t" style="left:201.02px;top:735.00px;font-size:9.6px;line-height:9.6px;font-family:'Liberation Sans', sans-serif;font-weight:bold;color:#000;letter-spacing:0.100px;">Leergut</div><div class="t" style="left:272.27px;top:735.00px;font-size:9.6px;line-height:9.6px;font-family:'Liberation Sans', sans-serif;font-weight:bold;color:#000;letter-spacing:0.100px;">Netto</div><div class="t" style="left:314.91px;top:735.00px;font-size:9.6px;line-height:9.6px;font-family:'Liberation Sans', sans-serif;font-weight:bold;color:#000;letter-spacing:0.100px;">MwSt %</div><div class="t" style="left:381.64px;top:735.00px;font-size:9.6px;line-height:9.6px;font-family:'Liberation Sans', sans-serif;font-weight:bold;color:#000;letter-spacing:0.100px;">MwSt</div><div class="t" style="left:442.40px;top:735.00px;font-size:9.6px;line-height:9.6px;font-family:'Liberation Sans', sans-serif;font-weight:bold;color:#000;letter-spacing:0.100px;">Brutto</div><div class="t" style="left:511.74px;top:735.00px;font-size:9.6px;line-height:9.6px;font-family:'Liberation Sans', sans-serif;font-weight:bold;color:#000;letter-spacing:0.100px;">Gesamtbetrag</div><div class="r" style="left:42px;top:747.6px;width:540px;height:3.5200000000000005px;background:#000"></div><div class="t" style="left:73.70px;top:751.00px;font-size:9.6px;line-height:9.6px;font-family:'Liberation Sans', sans-serif;font-weight:normal;color:#000;letter-spacing:-0.400px;">1361,28</div><div class="t" style="left:210.14px;top:751.00px;font-size:9.6px;line-height:9.6px;font-family:'Liberation Sans', sans-serif;font-weight:normal;color:#000;letter-spacing:-0.400px;">116,40</div><div class="t" style="left:264.70px;top:751.00px;font-size:9.6px;line-height:9.6px;font-family:'Liberation Sans', sans-serif;font-weight:normal;color:#000;letter-spacing:-0.400px;">1200,00</div><div class="t" style="left:334.23px;top:751.00px;font-size:9.6px;line-height:9.6px;font-family:'Liberation Sans', sans-serif;font-weight:normal;color:#000;letter-spacing:-0.400px;">7,00</div><div class="t" style="left:384.55px;top:751.00px;font-size:9.6px;line-height:9.6px;font-family:'Liberation Sans', sans-serif;font-weight:normal;color:#000;letter-spacing:-0.400px;">84,00</div><div class="t" style="left:439.40px;top:751.00px;font-size:9.6px;line-height:9.6px;font-family:'Liberation Sans', sans-serif;font-weight:normal;color:#000;letter-spacing:-0.400px;">1284,00</div><div class="t" style="left:269.62px;top:770.00px;font-size:9.6px;line-height:9.6px;font-family:'Liberation Sans', sans-serif;font-weight:normal;color:#000;letter-spacing:-0.400px;">277,68</div><div class="t" style="left:329.25px;top:770.00px;font-size:9.6px;line-height:9.6px;font-family:'Liberation Sans', sans-serif;font-weight:normal;color:#000;letter-spacing:-0.400px;">19,00</div><div class="t" style="left:384.55px;top:770.00px;font-size:9.6px;line-height:9.6px;font-family:'Liberation Sans', sans-serif;font-weight:normal;color:#000;letter-spacing:-0.400px;">52,76</div><div class="t" style="left:444.32px;top:770.00px;font-size:9.6px;line-height:9.6px;font-family:'Liberation Sans', sans-serif;font-weight:normal;color:#000;letter-spacing:-0.400px;">330,44</div><div class="t" style="left:502.00px;top:756.00px;font-size:16.8px;line-height:16.8px;font-family:'Liberation Sans', sans-serif;font-weight:bold;color:#000;letter-spacing:-0.520px;">1.614,44 €</div><div class="t" style="left:46.40px;top:787.00px;font-size:9.6px;line-height:9.6px;font-family:'Liberation Sans', sans-serif;font-weight:bold;color:#000;letter-spacing:-0.206px;">Musterfirma</div><div class="t" style="left:166.80px;top:787.00px;font-size:9.6px;line-height:9.6px;font-family:'Liberation Sans', sans-serif;font-weight:normal;color:#000;letter-spacing:0.083px;">Finanzamt</div><div class="t" style="left:166.80px;top:797.00px;font-size:9.6px;line-height:9.6px;font-family:'Liberation Sans', sans-serif;font-weight:normal;color:#000;letter-spacing:-0.161px;">Steuenummer:</div><div class="t" style="left:166.80px;top:806.00px;font-size:9.6px;line-height:9.6px;font-family:'Liberation Sans', sans-serif;font-weight:normal;color:#000;letter-spacing:0.000px;">UstIdNr.:</div><div class="t" style="left:306.60px;top:787.00px;font-size:9.6px;line-height:9.6px;font-family:'Liberation Sans', sans-serif;font-weight:bold;color:#000;letter-spacing:-0.390px;">Bankverbindung:</div><div class="t" style="left:306.60px;top:796.00px;font-size:9.6px;line-height:9.6px;font-family:'Liberation Sans', sans-serif;font-weight:normal;color:#000;letter-spacing:0.000px;">Bank:</div><div class="t" style="left:306.60px;top:807.00px;font-size:9.6px;line-height:9.6px;font-family:'Liberation Sans', sans-serif;font-weight:normal;color:#000;letter-spacing:0.000px;">BIC:</div><div class="t" style="left:306.60px;top:817.00px;font-size:9.6px;line-height:9.6px;font-family:'Liberation Sans', sans-serif;font-weight:normal;color:#000;letter-spacing:0.000px;">IBAN:</div><svg class="r" style="left:474.30px;top:790.30px" width="48.1" height="48.1" viewBox="0 0 48.1 48.1"><g fill="#111"><rect x="0.00" y="0.00" width="8.21" height="1.17"/><rect x="9.39" y="0.00" width="5.87" height="1.17"/><rect x="16.42" y="0.00" width="2.35" height="1.17"/><rect x="22.29" y="0.00" width="1.17" height="1.17"/><rect x="24.64" y="0.00" width="1.17" height="1.17"/><rect x="26.98" y="0.00" width="4.69" height="1.17"/><rect x="32.85" y="0.00" width="1.17" height="1.17"/><rect x="36.37" y="0.00" width="1.17" height="1.17"/><rect x="39.89" y="0.00" width="8.21" height="1.17"/><rect x="0.00" y="1.17" width="1.17" height="1.17"/><rect x="7.04" y="1.17" width="1.17" height="1.17"/><rect x="9.39" y="1.17" width="1.17" height="1.17"/><rect x="11.73" y="1.17" width="2.35" height="1.17"/><rect x="15.25" y="1.17" width="3.52" height="1.17"/><rect x="23.46" y="1.17" width="1.17" height="1.17"/><rect x="28.16" y="1.17" width="1.17" height="1.17"/><rect x="31.68" y="1.17" width="1.17" height="1.17"/><rect x="34.02" y="1.17" width="1.17" height="1.17"/><rect x="39.89" y="1.17" width="1.17" height="1.17"/><rect x="46.93" y="1.17" width="1.17" height="1.17"/><rect x="0.00" y="2.35" width="1.17" height="1.17"/><rect x="2.35" y="2.35" width="3.52" height="1.17"/><rect x="7.04" y="2.35" width="1.17" height="1.17"/><rect x="14.08" y="2.35" width="3.52" height="1.17"/><rect x="19.94" y="2.35" width="5.87" height="1.17"/><rect x="26.98" y="2.35" width="4.69" height="1.17"/><rect x="39.89" y="2.35" width="1.17" height="1.17"/><rect x="42.23" y="2.35" width="3.52" height="1.17"/><rect x="46.93" y="2.35" width="1.17" height="1.17"/><rect x="0.00" y="3.52" width="1.17" height="1.17"/><rect x="2.35" y="3.52" width="3.52" height="1.17"/><rect x="7.04" y="3.52" width="1.17" height="1.17"/><rect x="9.39" y="3.52" width="4.69" height="1.17"/><rect x="16.42" y="3.52" width="5.87" height="1.17"/><rect x="24.64" y="3.52" width="7.04" height="1.17"/><rect x="32.85" y="3.52" width="2.35" height="1.17"/><rect x="37.54" y="3.52" width="1.17" height="1.17"/><rect x="39.89" y="3.52" width="1.17" height="1.17"/><rect x="42.23" y="3.52" width="3.52" height="1.17"/><rect x="46.93" y="3.52" width="1.17" height="1.17"/><rect x="0.00" y="4.69" width="1.17" height="1.17"/><rect x="2.35" y="4.69" width="3.52" height="1.17"/><rect x="7.04" y="4.69" width="1.17" height="1.17"/><rect x="14.08" y="4.69" width="1.17" height="1.17"/><rect x="16.42" y="4.69" width="5.87" height="1.17"/><rect x="24.64" y="4.69" width="1.17" height="1.17"/><rect x="29.33" y="4.69" width="5.87" height="1.17"/><rect x="39.89" y="4.69" width="1.17" height="1.17"/><rect x="42.23" y="4.69" width="3.52" height="1.17"/><rect x="46.93" y="4.69" width="1.17" height="1.17"/><rect x="0.00" y="5.87" width="1.17" height="1.17"/><rect x="7.04" y="5.87" width="1.17" height="1.17"/><rect x="11.73" y="5.87" width="3.52" height="1.17"/><rect x="17.60" y="5.87" width="1.17" height="1.17"/><rect x="22.29" y="5.87" width="1.17" height="1.17"/><rect x="24.64" y="5.87" width="2.35" height="1.17"/><rect x="31.68" y="5.87" width="1.17" height="1.17"/><rect x="35.20" y="5.87" width="3.52" height="1.17"/><rect x="39.89" y="5.87" width="1.17" height="1.17"/><rect x="46.93" y="5.87" width="1.17" height="1.17"/><rect x="0.00" y="7.04" width="8.21" height="1.17"/><rect x="9.39" y="7.04" width="3.52" height="1.17"/><rect x="14.08" y="7.04" width="2.35" height="1.17"/><rect x="18.77" y="7.04" width="1.17" height="1.17"/><rect x="23.46" y="7.04" width="1.17" height="1.17"/><rect x="25.81" y="7.04" width="2.35" height="1.17"/><rect x="34.02" y="7.04" width="1.17" height="1.17"/><rect x="39.89" y="7.04" width="8.21" height="1.17"/><rect x="9.39" y="8.21" width="2.35" height="1.17"/><rect x="15.25" y="8.21" width="1.17" height="1.17"/><rect x="18.77" y="8.21" width="1.17" height="1.17"/><rect x="22.29" y="8.21" width="1.17" height="1.17"/><rect x="24.64" y="8.21" width="2.35" height="1.17"/><rect x="29.33" y="8.21" width="2.35" height="1.17"/><rect x="32.85" y="8.21" width="3.52" height="1.17"/><rect x="37.54" y="8.21" width="1.17" height="1.17"/><rect x="2.35" y="9.39" width="3.52" height="1.17"/><rect x="7.04" y="9.39" width="3.52" height="1.17"/><rect x="12.90" y="9.39" width="2.35" height="1.17"/><rect x="18.77" y="9.39" width="2.35" height="1.17"/><rect x="22.29" y="9.39" width="2.35" height="1.17"/><rect x="28.16" y="9.39" width="1.17" height="1.17"/><rect x="30.50" y="9.39" width="1.17" height="1.17"/><rect x="32.85" y="9.39" width="2.35" height="1.17"/><rect x="37.54" y="9.39" width="2.35" height="1.17"/><rect x="41.06" y="9.39" width="7.04" height="1.17"/><rect x="0.00" y="10.56" width="1.17" height="1.17"/><rect x="2.35" y="10.56" width="1.17" height="1.17"/><rect x="4.69" y="10.56" width="5.87" height="1.17"/><rect x="12.90" y="10.56" width="2.35" height="1.17"/><rect x="16.42" y="10.56" width="1.17" height="1.17"/><rect x="18.77" y="10.56" width="2.35" height="1.17"/><rect x="22.29" y="10.56" width="1.17" height="1.17"/><rect x="26.98" y="10.56" width="1.17" height="1.17"/><rect x="31.68" y="10.56" width="5.87" height="1.17"/><rect x="38.71" y="10.56" width="3.52" height="1.17"/><rect x="45.75" y="10.56" width="2.35" height="1.17"/><rect x="0.00" y="11.73" width="5.87" height="1.17"/><rect x="9.39" y="11.73" width="1.17" height="1.17"/><rect x="11.73" y="11.73" width="5.87" height="1.17"/><rect x="18.77" y="11.73" width="1.17" height="1.17"/><rect x="21.12" y="11.73" width="9.39" height="1.17"/><rect x="37.54" y="11.73" width="2.35" height="1.17"/><rect x="41.06" y="11.73" width="1.17" height="1.17"/><rect x="44.58" y="11.73" width="1.17" height="1.17"/><rect x="3.52" y="12.90" width="1.17" height="1.17"/><rect x="15.25" y="12.90" width="5.87" height="1.17"/><rect x="26.98" y="12.90" width="2.35" height="1.17"/><rect x="35.20" y="12.90" width="1.17" height="1.17"/><rect x="37.54" y="12.90" width="3.52" height="1.17"/><rect x="42.23" y="12.90" width="1.17" height="1.17"/><rect x="45.75" y="12.90" width="2.35" height="1.17"/><rect x="0.00" y="14.08" width="1.17" height="1.17"/><rect x="5.87" y="14.08" width="3.52" height="1.17"/><rect x="10.56" y="14.08" width="1.17" height="1.17"/><rect x="12.90" y="14.08" width="3.52" height="1.17"/><rect x="19.94" y="14.08" width="1.17" height="1.17"/><rect x="22.29" y="14.08" width="3.52" height="1.17"/><rect x="26.98" y="14.08" width="1.17" height="1.17"/><rect x="30.50" y="14.08" width="2.35" height="1.17"/><rect x="35.20" y="14.08" width="3.52" height="1.17"/><rect x="39.89" y="14.08" width="1.17" height="1.17"/><rect x="42.23" y="14.08" width="1.17" height="1.17"/><rect x="45.75" y="14.08" width="1.17" height="1.17"/><rect x="3.52" y="15.25" width="1.17" height="1.17"/><rect x="5.87" y="15.25" width="10.56" height="1.17"/><rect x="17.60" y="15.25" width="1.17" height="1.17"/><rect x="21.12" y="15.25" width="1.17" height="1.17"/><rect x="25.81" y="15.25" width="3.52" height="1.17"/><rect x="31.68" y="15.25" width="5.87" height="1.17"/><rect x="38.71" y="15.25" width="1.17" height="1.17"/><rect x="41.06" y="15.25" width="2.35" height="1.17"/><rect x="44.58" y="15.25" width="2.35" height="1.17"/><rect x="8.21" y="16.42" width="1.17" height="1.17"/><rect x="10.56" y="16.42" width="1.17" height="1.17"/><rect x="14.08" y="16.42" width="2.35" height="1.17"/><rect x="17.60" y="16.42" width="4.69" height="1.17"/><rect x="24.64" y="16.42" width="1.17" height="1.17"/><rect x="26.98" y="16.42" width="1.17" height="1.17"/><rect x="29.33" y="16.42" width="4.69" height="1.17"/><rect x="35.20" y="16.42" width="2.35" height="1.17"/><rect x="39.89" y="16.42" width="8.21" height="1.17"/><rect x="0.00" y="17.60" width="1.17" height="1.17"/><rect x="4.69" y="17.60" width="2.35" height="1.17"/><rect x="8.21" y="17.60" width="4.69" height="1.17"/><rect x="14.08" y="17.60" width="1.17" height="1.17"/><rect x="18.77" y="17.60" width="5.87" height="1.17"/><rect x="28.16" y="17.60" width="2.35" height="1.17"/><rect x="32.85" y="17.60" width="1.17" height="1.17"/><rect x="35.20" y="17.60" width="2.35" height="1.17"/><rect x="42.23" y="17.60" width="3.52" height="1.17"/><rect x="4.69" y="18.77" width="1.17" height="1.17"/><rect x="7.04" y="18.77" width="1.17" height="1.17"/><rect x="9.39" y="18.77" width="1.17" height="1.17"/><rect x="12.90" y="18.77" width="3.52" height="1.17"/><rect x="18.77" y="18.77" width="2.35" height="1.17"/><rect x="23.46" y="18.77" width="2.35" height="1.17"/><rect x="26.98" y="18.77" width="3.52" height="1.17"/><rect x="34.02" y="18.77" width="3.52" height="1.17"/><rect x="39.89" y="18.77" width="3.52" height="1.17"/><rect x="44.58" y="18.77" width="2.35" height="1.17"/><rect x="1.17" y="19.94" width="4.69" height="1.17"/><rect x="7.04" y="19.94" width="1.17" height="1.17"/><rect x="11.73" y="19.94" width="1.17" height="1.17"/><rect x="14.08" y="19.94" width="1.17" height="1.17"/><rect x="16.42" y="19.94" width="2.35" height="1.17"/><rect x="19.94" y="19.94" width="1.17" height="1.17"/><rect x="22.29" y="19.94" width="4.69" height="1.17"/><rect x="29.33" y="19.94" width="3.52" height="1.17"/><rect x="34.02" y="19.94" width="4.69" height="1.17"/><rect x="44.58" y="19.94" width="2.35" height="1.17"/><rect x="1.17" y="21.12" width="1.17" height="1.17"/><rect x="3.52" y="21.12" width="8.21" height="1.17"/><rect x="12.90" y="21.12" width="1.17" height="1.17"/><rect x="15.25" y="21.12" width="2.35" height="1.17"/><rect x="19.94" y="21.12" width="4.69" height="1.17"/><rect x="25.81" y="21.12" width="2.35" height="1.17"/><rect x="29.33" y="21.12" width="2.35" height="1.17"/><rect x="34.02" y="21.12" width="3.52" height="1.17"/><rect x="38.71" y="21.12" width="1.17" height="1.17"/><rect x="42.23" y="21.12" width="2.35" height="1.17"/><rect x="46.93" y="21.12" width="1.17" height="1.17"/><rect x="1.17" y="22.29" width="3.52" height="1.17"/><rect x="9.39" y="22.29" width="3.52" height="1.17"/><rect x="15.25" y="22.29" width="4.69" height="1.17"/><rect x="21.12" y="22.29" width="1.17" height="1.17"/><rect x="28.16" y="22.29" width="3.52" height="1.17"/><rect x="32.85" y="22.29" width="2.35" height="1.17"/><rect x="36.37" y="22.29" width="3.52" height="1.17"/><rect x="41.06" y="22.29" width="1.17" height="1.17"/><rect x="45.75" y="22.29" width="2.35" height="1.17"/><rect x="0.00" y="23.46" width="2.35" height="1.17"/><rect x="3.52" y="23.46" width="3.52" height="1.17"/><rect x="12.90" y="23.46" width="1.17" height="1.17"/><rect x="15.25" y="23.46" width="1.17" height="1.17"/><rect x="17.60" y="23.46" width="1.17" height="1.17"/><rect x="19.94" y="23.46" width="4.69" height="1.17"/><rect x="26.98" y="23.46" width="2.35" height="1.17"/><rect x="31.68" y="23.46" width="1.17" height="1.17"/><rect x="36.37" y="23.46" width="2.35" height="1.17"/><rect x="42.23" y="23.46" width="4.69" height="1.17"/><rect x="2.35" y="24.64" width="1.17" height="1.17"/><rect x="4.69" y="24.64" width="2.35" height="1.17"/><rect x="9.39" y="24.64" width="1.17" height="1.17"/><rect x="12.90" y="24.64" width="5.87" height="1.17"/><rect x="21.12" y="24.64" width="3.52" height="1.17"/><rect x="25.81" y="24.64" width="3.52" height="1.17"/><rect x="31.68" y="24.64" width="3.52" height="1.17"/><rect x="37.54" y="24.64" width="2.35" height="1.17"/><rect x="41.06" y="24.64" width="3.52" height="1.17"/><rect x="45.75" y="24.64" width="1.17" height="1.17"/><rect x="0.00" y="25.81" width="2.35" height="1.17"/><rect x="4.69" y="25.81" width="2.35" height="1.17"/><rect x="8.21" y="25.81" width="2.35" height="1.17"/><rect x="11.73" y="25.81" width="1.17" height="1.17"/><rect x="14.08" y="25.81" width="1.17" height="1.17"/><rect x="16.42" y="25.81" width="3.52" height="1.17"/><rect x="23.46" y="25.81" width="1.17" height="1.17"/><rect x="25.81" y="25.81" width="1.17" height="1.17"/><rect x="28.16" y="25.81" width="2.35" height="1.17"/><rect x="32.85" y="25.81" width="2.35" height="1.17"/><rect x="37.54" y="25.81" width="2.35" height="1.17"/><rect x="42.23" y="25.81" width="2.35" height="1.17"/><rect x="45.75" y="25.81" width="1.17" height="1.17"/><rect x="2.35" y="26.98" width="1.17" height="1.17"/><rect x="4.69" y="26.98" width="2.35" height="1.17"/><rect x="9.39" y="26.98" width="3.52" height="1.17"/><rect x="14.08" y="26.98" width="3.52" height="1.17"/><rect x="19.94" y="26.98" width="1.17" height="1.17"/><rect x="23.46" y="26.98" width="1.17" height="1.17"/><rect x="25.81" y="26.98" width="1.17" height="1.17"/><rect x="30.50" y="26.98" width="2.35" height="1.17"/><rect x="34.02" y="26.98" width="1.17" height="1.17"/><rect x="36.37" y="26.98" width="3.52" height="1.17"/><rect x="41.06" y="26.98" width="2.35" height="1.17"/><rect x="45.75" y="26.98" width="2.35" height="1.17"/><rect x="0.00" y="28.16" width="7.04" height="1.17"/><rect x="8.21" y="28.16" width="1.17" height="1.17"/><rect x="10.56" y="28.16" width="1.17" height="1.17"/><rect x="15.25" y="28.16" width="1.17" height="1.17"/><rect x="17.60" y="28.16" width="1.17" height="1.17"/><rect x="19.94" y="28.16" width="1.17" height="1.17"/><rect x="25.81" y="28.16" width="1.17" height="1.17"/><rect x="28.16" y="28.16" width="1.17" height="1.17"/><rect x="31.68" y="28.16" width="1.17" height="1.17"/><rect x="35.20" y="28.16" width="2.35" height="1.17"/><rect x="38.71" y="28.16" width="1.17" height="1.17"/><rect x="41.06" y="28.16" width="1.17" height="1.17"/><rect x="43.41" y="28.16" width="1.17" height="1.17"/><rect x="46.93" y="28.16" width="1.17" height="1.17"/><rect x="0.00" y="29.33" width="1.17" height="1.17"/><rect x="2.35" y="29.33" width="4.69" height="1.17"/><rect x="10.56" y="29.33" width="1.17" height="1.17"/><rect x="12.90" y="29.33" width="1.17" height="1.17"/><rect x="16.42" y="29.33" width="1.17" height="1.17"/><rect x="22.29" y="29.33" width="1.17" height="1.17"/><rect x="25.81" y="29.33" width="1.17" height="1.17"/><rect x="28.16" y="29.33" width="1.17" height="1.17"/><rect x="31.68" y="29.33" width="1.17" height="1.17"/><rect x="34.02" y="29.33" width="2.35" height="1.17"/><rect x="37.54" y="29.33" width="1.17" height="1.17"/><rect x="39.89" y="29.33" width="1.17" height="1.17"/><rect x="45.75" y="29.33" width="2.35" height="1.17"/><rect x="0.00" y="30.50" width="2.35" height="1.17"/><rect x="3.52" y="30.50" width="1.17" height="1.17"/><rect x="7.04" y="30.50" width="2.35" height="1.17"/><rect x="10.56" y="30.50" width="7.04" height="1.17"/><rect x="19.94" y="30.50" width="1.17" height="1.17"/><rect x="22.29" y="30.50" width="2.35" height="1.17"/><rect x="25.81" y="30.50" width="3.52" height="1.17"/><rect x="32.85" y="30.50" width="3.52" height="1.17"/><rect x="38.71" y="30.50" width="1.17" height="1.17"/><rect x="41.06" y="30.50" width="1.17" height="1.17"/><rect x="44.58" y="30.50" width="1.17" height="1.17"/><rect x="46.93" y="30.50" width="1.17" height="1.17"/><rect x="1.17" y="31.68" width="3.52" height="1.17"/><rect x="5.87" y="31.68" width="1.17" height="1.17"/><rect x="9.39" y="31.68" width="2.35" height="1.17"/><rect x="16.42" y="31.68" width="4.69" height="1.17"/><rect x="24.64" y="31.68" width="1.17" height="1.17"/><rect x="28.16" y="31.68" width="1.17" height="1.17"/><rect x="30.50" y="31.68" width="7.04" height="1.17"/><rect x="42.23" y="31.68" width="1.17" height="1.17"/><rect x="44.58" y="31.68" width="1.17" height="1.17"/><rect x="0.00" y="32.85" width="1.17" height="1.17"/><rect x="3.52" y="32.85" width="1.17" height="1.17"/><rect x="5.87" y="32.85" width="3.52" height="1.17"/><rect x="12.90" y="32.85" width="1.17" height="1.17"/><rect x="15.25" y="32.85" width="2.35" height="1.17"/><rect x="23.46" y="32.85" width="1.17" height="1.17"/><rect x="28.16" y="32.85" width="1.17" height="1.17"/><rect x="31.68" y="32.85" width="2.35" height="1.17"/><rect x="35.20" y="32.85" width="1.17" height="1.17"/><rect x="37.54" y="32.85" width="3.52" height="1.17"/><rect x="42.23" y="32.85" width="4.69" height="1.17"/><rect x="3.52" y="34.02" width="1.17" height="1.17"/><rect x="5.87" y="34.02" width="1.17" height="1.17"/><rect x="10.56" y="34.02" width="1.17" height="1.17"/><rect x="15.25" y="34.02" width="4.69" height="1.17"/><rect x="25.81" y="34.02" width="3.52" height="1.17"/><rect x="30.50" y="34.02" width="7.04" height="1.17"/><rect x="38.71" y="34.02" width="2.35" height="1.17"/><rect x="45.75" y="34.02" width="2.35" height="1.17"/><rect x="0.00" y="35.20" width="1.17" height="1.17"/><rect x="2.35" y="35.20" width="1.17" height="1.17"/><rect x="5.87" y="35.20" width="1.17" height="1.17"/><rect x="8.21" y="35.20" width="1.17" height="1.17"/><rect x="10.56" y="35.20" width="3.52" height="1.17"/><rect x="16.42" y="35.20" width="3.52" height="1.17"/><rect x="21.12" y="35.20" width="3.52" height="1.17"/><rect x="25.81" y="35.20" width="1.17" height="1.17"/><rect x="28.16" y="35.20" width="2.35" height="1.17"/><rect x="31.68" y="35.20" width="2.35" height="1.17"/><rect x="35.20" y="35.20" width="1.17" height="1.17"/><rect x="41.06" y="35.20" width="3.52" height="1.17"/><rect x="45.75" y="35.20" width="1.17" height="1.17"/><rect x="0.00" y="36.37" width="3.52" height="1.17"/><rect x="5.87" y="36.37" width="1.17" height="1.17"/><rect x="8.21" y="36.37" width="2.35" height="1.17"/><rect x="15.25" y="36.37" width="3.52" height="1.17"/><rect x="22.29" y="36.37" width="2.35" height="1.17"/><rect x="26.98" y="36.37" width="2.35" height="1.17"/><rect x="30.50" y="36.37" width="3.52" height="1.17"/><rect x="36.37" y="36.37" width="4.69" height="1.17"/><rect x="42.23" y="36.37" width="3.52" height="1.17"/><rect x="0.00" y="37.54" width="1.17" height="1.17"/><rect x="2.35" y="37.54" width="2.35" height="1.17"/><rect x="8.21" y="37.54" width="2.35" height="1.17"/><rect x="11.73" y="37.54" width="5.87" height="1.17"/><rect x="22.29" y="37.54" width="2.35" height="1.17"/><rect x="25.81" y="37.54" width="1.17" height="1.17"/><rect x="29.33" y="37.54" width="1.17" height="1.17"/><rect x="32.85" y="37.54" width="2.35" height="1.17"/><rect x="43.41" y="37.54" width="2.35" height="1.17"/><rect x="46.93" y="37.54" width="1.17" height="1.17"/><rect x="9.39" y="38.71" width="1.17" height="1.17"/><rect x="12.90" y="38.71" width="1.17" height="1.17"/><rect x="16.42" y="38.71" width="2.35" height="1.17"/><rect x="19.94" y="38.71" width="1.17" height="1.17"/><rect x="22.29" y="38.71" width="1.17" height="1.17"/><rect x="26.98" y="38.71" width="1.17" height="1.17"/><rect x="36.37" y="38.71" width="1.17" height="1.17"/><rect x="38.71" y="38.71" width="1.17" height="1.17"/><rect x="41.06" y="38.71" width="1.17" height="1.17"/><rect x="43.41" y="38.71" width="1.17" height="1.17"/><rect x="45.75" y="38.71" width="2.35" height="1.17"/><rect x="0.00" y="39.89" width="8.21" height="1.17"/><rect x="9.39" y="39.89" width="1.17" height="1.17"/><rect x="14.08" y="39.89" width="1.17" height="1.17"/><rect x="16.42" y="39.89" width="3.52" height="1.17"/><rect x="23.46" y="39.89" width="1.17" height="1.17"/><rect x="25.81" y="39.89" width="1.17" height="1.17"/><rect x="28.16" y="39.89" width="1.17" height="1.17"/><rect x="32.85" y="39.89" width="2.35" height="1.17"/><rect x="36.37" y="39.89" width="1.17" height="1.17"/><rect x="38.71" y="39.89" width="1.17" height="1.17"/><rect x="41.06" y="39.89" width="7.04" height="1.17"/><rect x="0.00" y="41.06" width="1.17" height="1.17"/><rect x="7.04" y="41.06" width="1.17" height="1.17"/><rect x="9.39" y="41.06" width="1.17" height="1.17"/><rect x="12.90" y="41.06" width="1.17" height="1.17"/><rect x="17.60" y="41.06" width="1.17" height="1.17"/><rect x="21.12" y="41.06" width="2.35" height="1.17"/><rect x="25.81" y="41.06" width="4.69" height="1.17"/><rect x="31.68" y="41.06" width="2.35" height="1.17"/><rect x="36.37" y="41.06" width="1.17" height="1.17"/><rect x="45.75" y="41.06" width="1.17" height="1.17"/><rect x="0.00" y="42.23" width="1.17" height="1.17"/><rect x="2.35" y="42.23" width="3.52" height="1.17"/><rect x="7.04" y="42.23" width="1.17" height="1.17"/><rect x="9.39" y="42.23" width="7.04" height="1.17"/><rect x="18.77" y="42.23" width="1.17" height="1.17"/><rect x="21.12" y="42.23" width="1.17" height="1.17"/><rect x="25.81" y="42.23" width="2.35" height="1.17"/><rect x="29.33" y="42.23" width="1.17" height="1.17"/><rect x="32.85" y="42.23" width="1.17" height="1.17"/><rect x="37.54" y="42.23" width="1.17" height="1.17"/><rect x="41.06" y="42.23" width="1.17" height="1.17"/><rect x="43.41" y="42.23" width="1.17" height="1.17"/><rect x="46.93" y="42.23" width="1.17" height="1.17"/><rect x="0.00" y="43.41" width="1.17" height="1.17"/><rect x="2.35" y="43.41" width="3.52" height="1.17"/><rect x="7.04" y="43.41" width="1.17" height="1.17"/><rect x="11.73" y="43.41" width="1.17" height="1.17"/><rect x="14.08" y="43.41" width="1.17" height="1.17"/><rect x="16.42" y="43.41" width="1.17" height="1.17"/><rect x="22.29" y="43.41" width="3.52" height="1.17"/><rect x="29.33" y="43.41" width="1.17" height="1.17"/><rect x="34.02" y="43.41" width="4.69" height="1.17"/><rect x="0.00" y="44.58" width="1.17" height="1.17"/><rect x="2.35" y="44.58" width="3.52" height="1.17"/><rect x="7.04" y="44.58" width="1.17" height="1.17"/><rect x="9.39" y="44.58" width="2.35" height="1.17"/><rect x="15.25" y="44.58" width="1.17" height="1.17"/><rect x="19.94" y="44.58" width="5.87" height="1.17"/><rect x="28.16" y="44.58" width="1.17" height="1.17"/><rect x="30.50" y="44.58" width="2.35" height="1.17"/><rect x="36.37" y="44.58" width="3.52" height="1.17"/><rect x="43.41" y="44.58" width="3.52" height="1.17"/><rect x="0.00" y="45.75" width="1.17" height="1.17"/><rect x="7.04" y="45.75" width="1.17" height="1.17"/><rect x="10.56" y="45.75" width="2.35" height="1.17"/><rect x="14.08" y="45.75" width="1.17" height="1.17"/><rect x="16.42" y="45.75" width="2.35" height="1.17"/><rect x="23.46" y="45.75" width="1.17" height="1.17"/><rect x="26.98" y="45.75" width="1.17" height="1.17"/><rect x="29.33" y="45.75" width="1.17" height="1.17"/><rect x="32.85" y="45.75" width="2.35" height="1.17"/><rect x="37.54" y="45.75" width="2.35" height="1.17"/><rect x="41.06" y="45.75" width="1.17" height="1.17"/><rect x="43.41" y="45.75" width="3.52" height="1.17"/><rect x="0.00" y="46.93" width="8.21" height="1.17"/><rect x="9.39" y="46.93" width="1.17" height="1.17"/><rect x="15.25" y="46.93" width="2.35" height="1.17"/><rect x="21.12" y="46.93" width="1.17" height="1.17"/><rect x="26.98" y="46.93" width="2.35" height="1.17"/><rect x="30.50" y="46.93" width="1.17" height="1.17"/><rect x="36.37" y="46.93" width="4.69" height="1.17"/><rect x="44.58" y="46.93" width="1.17" height="1.17"/></g></svg><div class="t" style="left:557.40px;top:825.00px;font-size:7.6px;line-height:7.6px;font-family:'Liberation Sans', sans-serif;font-weight:normal;color:#333;letter-spacing:0.027px;">Seite 1/1</div></div>
</body></html>
